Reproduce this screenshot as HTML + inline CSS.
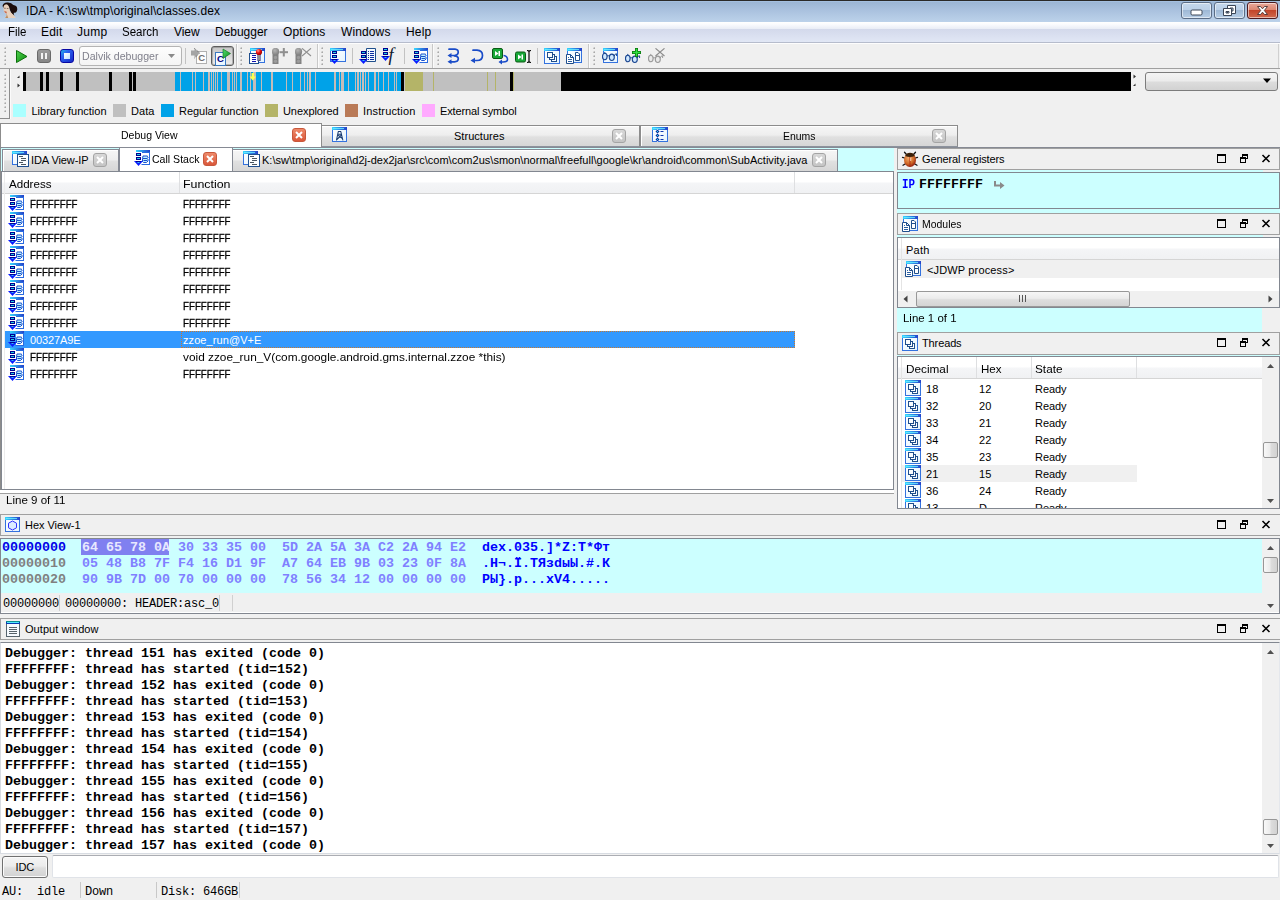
<!DOCTYPE html>
<html><head><meta charset="utf-8"><title>IDA</title>
<style>
html,body{margin:0;padding:0;}
body{width:1280px;height:900px;position:relative;overflow:hidden;background:#f0f0f0;font-family:"Liberation Sans",sans-serif;}
div,span,svg{position:absolute;box-sizing:border-box;}
span{white-space:pre;display:block;}
.s{font-family:"Liberation Sans",sans-serif;}
.m{font-family:"Liberation Mono",monospace;}
.b{font-weight:bold;}
</style></head><body>
<svg width="0" height="0" style="left:0;top:0"><defs>
<linearGradient id="wb" x1="0" y1="0" x2="1" y2="0"><stop offset="0" stop-color="#38d8ff"/><stop offset="0.6" stop-color="#2a7be0"/><stop offset="1" stop-color="#2440c8"/></linearGradient>
<linearGradient id="wf" x1="0" y1="0" x2="1" y2="1"><stop offset="0" stop-color="#ffffff"/><stop offset="1" stop-color="#e4f4ff"/></linearGradient>
<linearGradient id="gg" x1="0" y1="0" x2="1" y2="1"><stop offset="0" stop-color="#56e070"/><stop offset="1" stop-color="#0a8a1a"/></linearGradient>
<radialGradient id="bug" cx="0.4" cy="0.35" r="0.7"><stop offset="0" stop-color="#f6b070"/><stop offset="0.6" stop-color="#d06a28"/><stop offset="1" stop-color="#8a1408"/></radialGradient>
<radialGradient id="red" cx="0.35" cy="0.3" r="0.7"><stop offset="0" stop-color="#ff9a90"/><stop offset="0.5" stop-color="#f01010"/><stop offset="1" stop-color="#a00000"/></radialGradient>
<radialGradient id="gry" cx="0.4" cy="0.35" r="0.7"><stop offset="0" stop-color="#b4b4b4"/><stop offset="1" stop-color="#7c7c7c"/></radialGradient>
</defs></svg>
<div style="left:0px;top:0px;width:1280px;height:22px;background:linear-gradient(#98b3d2 0%,#a9c1de 45%,#bcd2ea 100%);"></div>
<div style="left:0px;top:0px;width:1280px;height:1px;background:#2a2a28;"></div>
<div style="left:0px;top:1px;width:1280px;height:1px;background:#a4c0e0;"></div>
<span class="s" style="left:26px;top:3px;font-size:12px;line-height:16px;letter-spacing:0.091px;">IDA - K:\sw\tmp\original\classes.dex</span>
<div style="left:1181px;top:2px;width:31px;height:17px;background:linear-gradient(#c5d8ec 0%,#bbd0e8 45%,#9fb9d6 50%,#b7cee6 100%);border:1px solid #5b6d86;border-radius:3px;box-shadow:inset 0 0 0 1px rgba(255,255,255,.55);"></div>
<div style="left:1214px;top:2px;width:31px;height:17px;background:linear-gradient(#c5d8ec 0%,#bbd0e8 45%,#9fb9d6 50%,#b7cee6 100%);border:1px solid #5b6d86;border-radius:3px;box-shadow:inset 0 0 0 1px rgba(255,255,255,.55);"></div>
<div style="left:1247px;top:2px;width:31px;height:17px;background:linear-gradient(#e9a99b 0%,#dc8671 45%,#c2452a 50%,#cf6a4f 100%);border:1px solid #4d1a1f;border-radius:3px;box-shadow:inset 0 0 0 1px rgba(255,255,255,.55);"></div>
<div style="left:0px;top:22px;width:1280px;height:20px;background:linear-gradient(#ffffff 0%,#fbfcfe 10%,#e9edf6 35%,#d3d9eb 35.1%,#d8deef 60%,#e1e7f5 100%);"></div>
<div style="left:0px;top:42px;width:1280px;height:1px;background:#b6bccc;"></div>
<div style="left:0px;top:43px;width:1280px;height:1px;background:#fdfdfd;"></div>
<span class="s" style="left:8px;top:24px;font-size:12px;line-height:16px;transform:scaleX(0.9568);transform-origin:0 0;">File</span>
<span class="s" style="left:41px;top:24px;font-size:12px;line-height:16px;letter-spacing:0.206px;">Edit</span>
<span class="s" style="left:77px;top:24px;font-size:12px;line-height:16px;letter-spacing:0.289px;">Jump</span>
<span class="s" style="left:122px;top:24px;font-size:12px;line-height:16px;transform:scaleX(0.9600);transform-origin:0 0;">Search</span>
<span class="s" style="left:174px;top:24px;font-size:12px;line-height:16px;letter-spacing:-0.073px;">View</span>
<span class="s" style="left:215px;top:24px;font-size:12px;line-height:16px;letter-spacing:-0.026px;">Debugger</span>
<span class="s" style="left:283px;top:24px;font-size:12px;line-height:16px;letter-spacing:0.163px;">Options</span>
<span class="s" style="left:341px;top:24px;font-size:12px;line-height:16px;letter-spacing:0.117px;">Windows</span>
<span class="s" style="left:406px;top:24px;font-size:12px;line-height:16px;letter-spacing:0.205px;">Help</span>
<div style="left:0px;top:68px;width:1280px;height:1px;background:#a0a0a0;"></div>
<div style="left:1278px;top:44px;width:1px;height:24px;background:#d0d0d0;"></div>
<div style="left:4px;top:47px;width:2px;height:2px;background:linear-gradient(135deg,#fbfbfb 0%,#c4c4c4 50%,#8c8c8c 100%);"></div>
<div style="left:4px;top:51px;width:2px;height:2px;background:linear-gradient(135deg,#fbfbfb 0%,#c4c4c4 50%,#8c8c8c 100%);"></div>
<div style="left:4px;top:55px;width:2px;height:2px;background:linear-gradient(135deg,#fbfbfb 0%,#c4c4c4 50%,#8c8c8c 100%);"></div>
<div style="left:4px;top:59px;width:2px;height:2px;background:linear-gradient(135deg,#fbfbfb 0%,#c4c4c4 50%,#8c8c8c 100%);"></div>
<div style="left:4px;top:63px;width:2px;height:2px;background:linear-gradient(135deg,#fbfbfb 0%,#c4c4c4 50%,#8c8c8c 100%);"></div>
<div style="left:240px;top:47px;width:2px;height:2px;background:linear-gradient(135deg,#fbfbfb 0%,#c4c4c4 50%,#8c8c8c 100%);"></div>
<div style="left:240px;top:51px;width:2px;height:2px;background:linear-gradient(135deg,#fbfbfb 0%,#c4c4c4 50%,#8c8c8c 100%);"></div>
<div style="left:240px;top:55px;width:2px;height:2px;background:linear-gradient(135deg,#fbfbfb 0%,#c4c4c4 50%,#8c8c8c 100%);"></div>
<div style="left:240px;top:59px;width:2px;height:2px;background:linear-gradient(135deg,#fbfbfb 0%,#c4c4c4 50%,#8c8c8c 100%);"></div>
<div style="left:240px;top:63px;width:2px;height:2px;background:linear-gradient(135deg,#fbfbfb 0%,#c4c4c4 50%,#8c8c8c 100%);"></div>
<div style="left:321px;top:47px;width:2px;height:2px;background:linear-gradient(135deg,#fbfbfb 0%,#c4c4c4 50%,#8c8c8c 100%);"></div>
<div style="left:321px;top:51px;width:2px;height:2px;background:linear-gradient(135deg,#fbfbfb 0%,#c4c4c4 50%,#8c8c8c 100%);"></div>
<div style="left:321px;top:55px;width:2px;height:2px;background:linear-gradient(135deg,#fbfbfb 0%,#c4c4c4 50%,#8c8c8c 100%);"></div>
<div style="left:321px;top:59px;width:2px;height:2px;background:linear-gradient(135deg,#fbfbfb 0%,#c4c4c4 50%,#8c8c8c 100%);"></div>
<div style="left:321px;top:63px;width:2px;height:2px;background:linear-gradient(135deg,#fbfbfb 0%,#c4c4c4 50%,#8c8c8c 100%);"></div>
<div style="left:437px;top:47px;width:2px;height:2px;background:linear-gradient(135deg,#fbfbfb 0%,#c4c4c4 50%,#8c8c8c 100%);"></div>
<div style="left:437px;top:51px;width:2px;height:2px;background:linear-gradient(135deg,#fbfbfb 0%,#c4c4c4 50%,#8c8c8c 100%);"></div>
<div style="left:437px;top:55px;width:2px;height:2px;background:linear-gradient(135deg,#fbfbfb 0%,#c4c4c4 50%,#8c8c8c 100%);"></div>
<div style="left:437px;top:59px;width:2px;height:2px;background:linear-gradient(135deg,#fbfbfb 0%,#c4c4c4 50%,#8c8c8c 100%);"></div>
<div style="left:437px;top:63px;width:2px;height:2px;background:linear-gradient(135deg,#fbfbfb 0%,#c4c4c4 50%,#8c8c8c 100%);"></div>
<div style="left:593px;top:47px;width:2px;height:2px;background:linear-gradient(135deg,#fbfbfb 0%,#c4c4c4 50%,#8c8c8c 100%);"></div>
<div style="left:593px;top:51px;width:2px;height:2px;background:linear-gradient(135deg,#fbfbfb 0%,#c4c4c4 50%,#8c8c8c 100%);"></div>
<div style="left:593px;top:55px;width:2px;height:2px;background:linear-gradient(135deg,#fbfbfb 0%,#c4c4c4 50%,#8c8c8c 100%);"></div>
<div style="left:593px;top:59px;width:2px;height:2px;background:linear-gradient(135deg,#fbfbfb 0%,#c4c4c4 50%,#8c8c8c 100%);"></div>
<div style="left:593px;top:63px;width:2px;height:2px;background:linear-gradient(135deg,#fbfbfb 0%,#c4c4c4 50%,#8c8c8c 100%);"></div>
<div style="left:185px;top:48px;width:1px;height:16px;background:#c2c2c2;"></div>
<div style="left:352px;top:48px;width:1px;height:16px;background:#c2c2c2;"></div>
<div style="left:404px;top:48px;width:1px;height:16px;background:#c2c2c2;"></div>
<div style="left:537px;top:48px;width:1px;height:16px;background:#c2c2c2;"></div>
<div style="left:236px;top:44px;width:1px;height:24px;background:#c8c8c8;"></div>
<div style="left:237px;top:44px;width:1px;height:24px;background:#fbfbfb;"></div>
<div style="left:317px;top:44px;width:1px;height:24px;background:#c8c8c8;"></div>
<div style="left:318px;top:44px;width:1px;height:24px;background:#fbfbfb;"></div>
<div style="left:432px;top:44px;width:1px;height:24px;background:#c8c8c8;"></div>
<div style="left:433px;top:44px;width:1px;height:24px;background:#fbfbfb;"></div>
<div style="left:588px;top:44px;width:1px;height:24px;background:#c8c8c8;"></div>
<div style="left:589px;top:44px;width:1px;height:24px;background:#fbfbfb;"></div>
<svg style="left:13px;top:48px;" width="16" height="16" viewBox="0 0 16 16"><defs><linearGradient id="gp" x1="0" y1="0" x2="1" y2="1"><stop offset="0" stop-color="#4fd24f"/><stop offset="1" stop-color="#0c8a0c"/></linearGradient></defs><path d="M3.5 2.5 L14 8.5 L3.5 14.5 Z" fill="url(#gp)" stroke="#0a6e0a" stroke-width="1"/></svg>
<div style="left:37px;top:49px;width:14px;height:14px;background:linear-gradient(#9c9c9c,#868686);border:1px solid #6a6a6a;border-radius:3px;"></div>
<div style="left:41px;top:53px;width:2px;height:6px;background:#f4f4f4;"></div>
<div style="left:45px;top:53px;width:2px;height:6px;background:#f4f4f4;"></div>
<div style="left:60px;top:49px;width:14px;height:14px;background:linear-gradient(135deg,#20b4e8 0%,#2c60f0 35%,#1428c4 100%);border:1px solid #0808a4;border-radius:3px;"></div>
<div style="left:64px;top:53px;width:6px;height:6px;background:linear-gradient(135deg,#ffffff,#bfe0ff);"></div>
<div style="left:79px;top:46px;width:103px;height:20px;background:linear-gradient(#fdfdfd,#f4f4f4);border:1px solid #b4b4b4;border-radius:3px;"></div>
<span class="s" style="left:82px;top:49px;font-size:11.5px;line-height:14px;color:#80808c;transform:scaleX(0.9205);transform-origin:0 0;">Dalvik debugger</span>
<svg style="left:167px;top:53px;" width="10" height="6" viewBox="0 0 10 6"><path d="M1 1 L8 1 L4.5 5 Z" fill="#8a8a8a"/></svg>
<div style="left:211px;top:46px;width:23px;height:20px;background:linear-gradient(#c6c6c6,#ececec);border:1px solid #5c5c5c;border-radius:3px;box-shadow:inset 0 0 0 1px rgba(90,90,90,.35);"></div>
<div style="left:9px;top:69px;width:1px;height:50px;background:#8c8c8c;"></div>
<div style="left:10px;top:69px;width:1px;height:50px;background:#fbfbfb;"></div>
<div style="left:0px;top:118px;width:10px;height:1px;background:#8c8c8c;"></div>
<div style="left:4px;top:74px;width:2px;height:2px;background:linear-gradient(135deg,#fbfbfb 0%,#c4c4c4 50%,#8c8c8c 100%);"></div>
<div style="left:4px;top:78px;width:2px;height:2px;background:linear-gradient(135deg,#fbfbfb 0%,#c4c4c4 50%,#8c8c8c 100%);"></div>
<div style="left:4px;top:82px;width:2px;height:2px;background:linear-gradient(135deg,#fbfbfb 0%,#c4c4c4 50%,#8c8c8c 100%);"></div>
<div style="left:4px;top:86px;width:2px;height:2px;background:linear-gradient(135deg,#fbfbfb 0%,#c4c4c4 50%,#8c8c8c 100%);"></div>
<div style="left:4px;top:90px;width:2px;height:2px;background:linear-gradient(135deg,#fbfbfb 0%,#c4c4c4 50%,#8c8c8c 100%);"></div>
<div style="left:4px;top:94px;width:2px;height:2px;background:linear-gradient(135deg,#fbfbfb 0%,#c4c4c4 50%,#8c8c8c 100%);"></div>
<div style="left:4px;top:98px;width:2px;height:2px;background:linear-gradient(135deg,#fbfbfb 0%,#c4c4c4 50%,#8c8c8c 100%);"></div>
<div style="left:4px;top:102px;width:2px;height:2px;background:linear-gradient(135deg,#fbfbfb 0%,#c4c4c4 50%,#8c8c8c 100%);"></div>
<div style="left:4px;top:106px;width:2px;height:2px;background:linear-gradient(135deg,#fbfbfb 0%,#c4c4c4 50%,#8c8c8c 100%);"></div>
<div style="left:4px;top:110px;width:2px;height:2px;background:linear-gradient(135deg,#fbfbfb 0%,#c4c4c4 50%,#8c8c8c 100%);"></div>
<div style="left:23px;top:72px;width:1108px;height:19px;background:#c0c0c0;"></div>
<div style="left:23px;top:72px;width:3px;height:19px;background:#000;"></div>
<div style="left:40px;top:72px;width:3px;height:19px;background:#000;"></div>
<div style="left:46px;top:72px;width:3px;height:19px;background:#000;"></div>
<div style="left:60px;top:72px;width:3px;height:19px;background:#000;"></div>
<div style="left:76px;top:72px;width:3px;height:19px;background:#000;"></div>
<div style="left:109px;top:72px;width:3px;height:19px;background:#000;"></div>
<div style="left:129px;top:72px;width:3px;height:19px;background:#000;"></div>
<div style="left:133px;top:72px;width:3px;height:19px;background:#000;"></div>
<div style="left:401px;top:72px;width:3px;height:19px;background:#000;"></div>
<div style="left:510px;top:72px;width:3px;height:19px;background:#000;"></div>
<div style="left:561px;top:72px;width:570px;height:19px;background:#000;"></div>
<div style="left:175px;top:72px;width:226px;height:19px;background:#00a2e8;"></div>
<div style="left:180px;top:72px;width:1px;height:19px;background:#c4bcb8;"></div>
<div style="left:192px;top:72px;width:1px;height:19px;background:#c4bcb8;"></div>
<div style="left:195px;top:72px;width:1px;height:19px;background:#c4bcb8;"></div>
<div style="left:203px;top:72px;width:1px;height:19px;background:#c4bcb8;"></div>
<div style="left:208px;top:72px;width:2px;height:19px;background:#c4bcb8;"></div>
<div style="left:211px;top:72px;width:1px;height:19px;background:#c4bcb8;"></div>
<div style="left:213px;top:72px;width:1px;height:19px;background:#c4bcb8;"></div>
<div style="left:215px;top:72px;width:1px;height:19px;background:#c4bcb8;"></div>
<div style="left:217px;top:72px;width:1px;height:19px;background:#c4bcb8;"></div>
<div style="left:221px;top:72px;width:1px;height:19px;background:#c4bcb8;"></div>
<div style="left:227px;top:72px;width:3px;height:19px;background:#c4bcb8;"></div>
<div style="left:232px;top:72px;width:1px;height:19px;background:#c4bcb8;"></div>
<div style="left:234px;top:72px;width:1px;height:19px;background:#c4bcb8;"></div>
<div style="left:236px;top:72px;width:1px;height:19px;background:#c4bcb8;"></div>
<div style="left:240px;top:72px;width:2px;height:19px;background:#c4bcb8;"></div>
<div style="left:247px;top:72px;width:1px;height:19px;background:#c4bcb8;"></div>
<div style="left:250px;top:72px;width:1px;height:19px;background:#c4bcb8;"></div>
<div style="left:253px;top:72px;width:3px;height:19px;background:#c4bcb8;"></div>
<div style="left:261px;top:72px;width:1px;height:19px;background:#c4bcb8;"></div>
<div style="left:271px;top:72px;width:2px;height:19px;background:#c4bcb8;"></div>
<div style="left:286px;top:72px;width:1px;height:19px;background:#c4bcb8;"></div>
<div style="left:292px;top:72px;width:1px;height:19px;background:#c4bcb8;"></div>
<div style="left:300px;top:72px;width:1px;height:19px;background:#c4bcb8;"></div>
<div style="left:304px;top:72px;width:1px;height:19px;background:#c4bcb8;"></div>
<div style="left:307px;top:72px;width:1px;height:19px;background:#c4bcb8;"></div>
<div style="left:309px;top:72px;width:2px;height:19px;background:#c4bcb8;"></div>
<div style="left:315px;top:72px;width:1px;height:19px;background:#c4bcb8;"></div>
<div style="left:334px;top:72px;width:2px;height:19px;background:#c4bcb8;"></div>
<div style="left:339px;top:72px;width:1px;height:19px;background:#c4bcb8;"></div>
<div style="left:341px;top:72px;width:3px;height:19px;background:#c4bcb8;"></div>
<div style="left:348px;top:72px;width:1px;height:19px;background:#c4bcb8;"></div>
<div style="left:355px;top:72px;width:1px;height:19px;background:#c4bcb8;"></div>
<div style="left:357px;top:72px;width:2px;height:19px;background:#c4bcb8;"></div>
<div style="left:360px;top:72px;width:1px;height:19px;background:#c4bcb8;"></div>
<div style="left:362px;top:72px;width:2px;height:19px;background:#c4bcb8;"></div>
<div style="left:365px;top:72px;width:1px;height:19px;background:#c4bcb8;"></div>
<div style="left:368px;top:72px;width:1px;height:19px;background:#c4bcb8;"></div>
<div style="left:374px;top:72px;width:2px;height:19px;background:#c4bcb8;"></div>
<div style="left:378px;top:72px;width:1px;height:19px;background:#c4bcb8;"></div>
<div style="left:383px;top:72px;width:1px;height:19px;background:#c4bcb8;"></div>
<div style="left:388px;top:72px;width:1px;height:19px;background:#c4bcb8;"></div>
<div style="left:394px;top:72px;width:1px;height:19px;background:#c4bcb8;"></div>
<div style="left:396px;top:72px;width:1px;height:19px;background:#c4bcb8;"></div>
<div style="left:405px;top:72px;width:18px;height:19px;background:#b4b468;"></div>
<div style="left:433px;top:72px;width:1px;height:19px;background:#b4b468;"></div>
<div style="left:487px;top:72px;width:1px;height:19px;background:#b4b468;"></div>
<div style="left:495px;top:72px;width:1px;height:19px;background:#b4b468;"></div>
<div style="left:513px;top:72px;width:1px;height:19px;background:#b4b468;"></div>
<svg style="left:249px;top:73px;" width="8" height="8" viewBox="0 0 8 8"><path d="M2.5 0 H5 V3.5 H7 L3.75 7.5 L0.5 3.5 H2.5 Z" fill="#ffff50"/></svg>
<svg style="left:16px;top:74px;" width="5" height="14" viewBox="0 0 5 14"><path d="M3.5 1.5 V4 H1 Z" fill="#333"/><path d="M1.5 9.5 L4 11.5 L1.5 13.5 Z" fill="#333"/></svg>
<svg style="left:1132px;top:74px;" width="5" height="14" viewBox="0 0 5 14"><path d="M1.5 0.5 L4 2.5 L1.5 4.5 Z" fill="#333"/><path d="M3.5 9.5 V12 H1 Z" fill="#333"/></svg>
<div style="left:1145px;top:72px;width:133px;height:19px;background:linear-gradient(#f4f4f4 0%,#ececec 45%,#dcdcdc 55%,#d2d2d2 100%);border:1px solid #7c7c7c;border-radius:3px;"></div>
<svg style="left:1263px;top:78px;" width="9" height="6" viewBox="0 0 9 6"><path d="M0 0.5 H8 L4 5 Z" fill="#000"/></svg>
<div style="left:13px;top:104px;width:13px;height:13px;background:#aaffff;"></div>
<span class="s" style="left:31.5px;top:104px;font-size:11px;line-height:15px;letter-spacing:-0.013px;">Library function</span>
<div style="left:113px;top:104px;width:13px;height:13px;background:#c0c0c0;"></div>
<span class="s" style="left:131px;top:104px;font-size:11px;line-height:15px;letter-spacing:0.066px;">Data</span>
<div style="left:161px;top:104px;width:13px;height:13px;background:#00a2e8;"></div>
<span class="s" style="left:179px;top:104px;font-size:11px;line-height:15px;letter-spacing:-0.038px;">Regular function</span>
<div style="left:265px;top:104px;width:13px;height:13px;background:#b4b468;"></div>
<span class="s" style="left:283px;top:104px;font-size:11px;line-height:15px;letter-spacing:-0.076px;">Unexplored</span>
<div style="left:345px;top:104px;width:13px;height:13px;background:#b97a57;"></div>
<span class="s" style="left:363px;top:104px;font-size:11px;line-height:15px;letter-spacing:0.159px;">Instruction</span>
<div style="left:422px;top:104px;width:13px;height:13px;background:#ffaaff;"></div>
<span class="s" style="left:440px;top:104px;font-size:11px;line-height:15px;letter-spacing:-0.117px;">External symbol</span>
<div style="left:0px;top:123px;width:322px;height:24px;background:#fff;border:1px solid #8c8c8c;border-bottom:none;"></div>
<span class="s" style="left:121px;top:128px;font-size:11px;line-height:15px;transform:scaleX(0.9558);transform-origin:0 0;">Debug View</span>
<div style="left:292px;top:128px;width:14px;height:14px;background:linear-gradient(#ee8a6a,#d9573a);border:1px solid #c8583c;border-radius:3px;"></div>
<svg style="left:295px;top:131px;" width="8" height="8" viewBox="0 0 8 8"><path d="M1 1 L7 7 M7 1 L1 7" stroke="#fff" stroke-width="2" fill="none"/></svg>
<div style="left:322px;top:125px;width:318px;height:22px;background:linear-gradient(#f6f6f6 0%,#eeeeee 45%,#e0e0e0 55%,#d6d6d6 100%);border:1px solid #8c8c8c;border-left:none;border-bottom-color:#8c929c;box-shadow:inset 0 1px 0 #fff;"></div>
<span class="s" style="left:454px;top:129px;font-size:11px;line-height:15px;letter-spacing:0.037px;">Structures</span>
<div style="left:612px;top:129px;width:14px;height:14px;background:linear-gradient(#d8d8d8,#c4c4c4);border:1px solid #a4a4a4;border-radius:3px;"></div>
<svg style="left:615px;top:132px;" width="8" height="8" viewBox="0 0 8 8"><path d="M1 1 L7 7 M7 1 L1 7" stroke="#fff" stroke-width="2" fill="none"/></svg>
<div style="left:640px;top:125px;width:318px;height:22px;background:linear-gradient(#f6f6f6 0%,#eeeeee 45%,#e0e0e0 55%,#d6d6d6 100%);border:1px solid #8c8c8c;border-bottom-color:#8c929c;box-shadow:inset 1px 1px 0 #fff;"></div>
<span class="s" style="left:783px;top:129px;font-size:11px;line-height:15px;transform:scaleX(0.9493);transform-origin:0 0;">Enums</span>
<div style="left:932px;top:129px;width:14px;height:14px;background:linear-gradient(#d8d8d8,#c4c4c4);border:1px solid #a4a4a4;border-radius:3px;"></div>
<svg style="left:935px;top:132px;" width="8" height="8" viewBox="0 0 8 8"><path d="M1 1 L7 7 M7 1 L1 7" stroke="#fff" stroke-width="2" fill="none"/></svg>
<div style="left:0px;top:147px;width:894px;height:365px;background:#ccffff;"></div>
<div style="left:0px;top:147px;width:1px;height:366px;background:#8c8c8c;"></div>
<div style="left:2px;top:149px;width:117px;height:22px;background:linear-gradient(#f6f6f6 0%,#eeeeee 45%,#e0e0e0 55%,#d6d6d6 100%);border:1px solid #868a94;border-bottom:none;box-shadow:inset 1px 1px 0 #fff;"></div>
<span class="s" style="left:31px;top:153px;font-size:11px;line-height:15px;letter-spacing:-0.090px;">IDA View-IP</span>
<div style="left:93px;top:153px;width:14px;height:14px;background:linear-gradient(#d8d8d8,#c4c4c4);border:1px solid #a4a4a4;border-radius:3px;"></div>
<svg style="left:96px;top:156px;" width="8" height="8" viewBox="0 0 8 8"><path d="M1 1 L7 7 M7 1 L1 7" stroke="#fff" stroke-width="2" fill="none"/></svg>
<div style="left:119px;top:147px;width:114px;height:25px;background:#fff;border:1px solid #868a94;border-bottom:none;"></div>
<span class="s" style="left:152px;top:152px;font-size:11px;line-height:15px;transform:scaleX(0.9593);transform-origin:0 0;">Call Stack</span>
<div style="left:203px;top:152px;width:14px;height:14px;background:linear-gradient(#ee8a6a,#d9573a);border:1px solid #c8583c;border-radius:3px;"></div>
<svg style="left:206px;top:155px;" width="8" height="8" viewBox="0 0 8 8"><path d="M1 1 L7 7 M7 1 L1 7" stroke="#fff" stroke-width="2" fill="none"/></svg>
<div style="left:233px;top:149px;width:605px;height:22px;background:linear-gradient(#f6f6f6 0%,#eeeeee 45%,#e0e0e0 55%,#d6d6d6 100%);border:1px solid #868a94;border-left:none;border-bottom:none;box-shadow:inset 0 1px 0 #fff;"></div>
<span class="s" style="left:262px;top:153px;font-size:11px;line-height:15px;letter-spacing:0.020px;">K:\sw\tmp\original\d2j-dex2jar\src\com\com2us\smon\normal\freefull\google\kr\android\common\SubActivity.java</span>
<div style="left:812px;top:153px;width:14px;height:14px;background:linear-gradient(#d8d8d8,#c4c4c4);border:1px solid #a4a4a4;border-radius:3px;"></div>
<svg style="left:815px;top:156px;" width="8" height="8" viewBox="0 0 8 8"><path d="M1 1 L7 7 M7 1 L1 7" stroke="#fff" stroke-width="2" fill="none"/></svg>
<div style="left:1px;top:171px;width:893px;height:319px;background:#fff;border:1px solid #828790;"></div>
<div style="left:2px;top:172px;width:891px;height:21px;background:linear-gradient(#ffffff 0%,#ffffff 45%,#f4f5f7 55%,#f0f1f3 100%);"></div>
<div style="left:2px;top:193px;width:891px;height:1px;background:#d5d5d5;"></div>
<div style="left:179px;top:172px;width:1px;height:21px;background:#dedfe1;"></div>
<div style="left:794px;top:172px;width:1px;height:21px;background:#dedfe1;"></div>
<div style="left:4px;top:172px;width:1px;height:317px;background:#ececec;"></div>
<span class="s" style="left:9px;top:177px;font-size:11px;line-height:15px;transform:scaleX(1.0532);transform-origin:0 0;">Address</span>
<span class="s" style="left:183px;top:177px;font-size:11px;line-height:15px;transform:scaleX(1.1259);transform-origin:0 0;">Function</span>
<span class="s" style="left:30px;top:197px;font-size:11px;line-height:15px;transform:scaleX(0.8837);transform-origin:0 0;-webkit-text-stroke:0.3px;">FFFFFFFF</span>
<span class="s" style="left:183px;top:197px;font-size:11px;line-height:15px;transform:scaleX(0.8837);transform-origin:0 0;-webkit-text-stroke:0.3px;">FFFFFFFF</span>
<span class="s" style="left:30px;top:214px;font-size:11px;line-height:15px;transform:scaleX(0.8837);transform-origin:0 0;-webkit-text-stroke:0.3px;">FFFFFFFF</span>
<span class="s" style="left:183px;top:214px;font-size:11px;line-height:15px;transform:scaleX(0.8837);transform-origin:0 0;-webkit-text-stroke:0.3px;">FFFFFFFF</span>
<span class="s" style="left:30px;top:231px;font-size:11px;line-height:15px;transform:scaleX(0.8837);transform-origin:0 0;-webkit-text-stroke:0.3px;">FFFFFFFF</span>
<span class="s" style="left:183px;top:231px;font-size:11px;line-height:15px;transform:scaleX(0.8837);transform-origin:0 0;-webkit-text-stroke:0.3px;">FFFFFFFF</span>
<span class="s" style="left:30px;top:248px;font-size:11px;line-height:15px;transform:scaleX(0.8837);transform-origin:0 0;-webkit-text-stroke:0.3px;">FFFFFFFF</span>
<span class="s" style="left:183px;top:248px;font-size:11px;line-height:15px;transform:scaleX(0.8837);transform-origin:0 0;-webkit-text-stroke:0.3px;">FFFFFFFF</span>
<span class="s" style="left:30px;top:265px;font-size:11px;line-height:15px;transform:scaleX(0.8837);transform-origin:0 0;-webkit-text-stroke:0.3px;">FFFFFFFF</span>
<span class="s" style="left:183px;top:265px;font-size:11px;line-height:15px;transform:scaleX(0.8837);transform-origin:0 0;-webkit-text-stroke:0.3px;">FFFFFFFF</span>
<span class="s" style="left:30px;top:282px;font-size:11px;line-height:15px;transform:scaleX(0.8837);transform-origin:0 0;-webkit-text-stroke:0.3px;">FFFFFFFF</span>
<span class="s" style="left:183px;top:282px;font-size:11px;line-height:15px;transform:scaleX(0.8837);transform-origin:0 0;-webkit-text-stroke:0.3px;">FFFFFFFF</span>
<span class="s" style="left:30px;top:299px;font-size:11px;line-height:15px;transform:scaleX(0.8837);transform-origin:0 0;-webkit-text-stroke:0.3px;">FFFFFFFF</span>
<span class="s" style="left:183px;top:299px;font-size:11px;line-height:15px;transform:scaleX(0.8837);transform-origin:0 0;-webkit-text-stroke:0.3px;">FFFFFFFF</span>
<span class="s" style="left:30px;top:316px;font-size:11px;line-height:15px;transform:scaleX(0.8837);transform-origin:0 0;-webkit-text-stroke:0.3px;">FFFFFFFF</span>
<span class="s" style="left:183px;top:316px;font-size:11px;line-height:15px;transform:scaleX(0.8837);transform-origin:0 0;-webkit-text-stroke:0.3px;">FFFFFFFF</span>
<div style="left:5px;top:331px;width:790px;height:17px;background:#3399ff;"></div>
<div style="left:181px;top:331px;width:614px;height:17px;border:1px dotted #c87830;"></div>
<span class="s" style="left:30px;top:333px;font-size:11px;line-height:15px;color:#fff;letter-spacing:-0.110px;">00327A9E</span>
<span class="s" style="left:183px;top:333px;font-size:11px;line-height:15px;color:#fff;letter-spacing:0.082px;">zzoe_run@V+E</span>
<span class="s" style="left:30px;top:350px;font-size:11px;line-height:15px;transform:scaleX(0.8837);transform-origin:0 0;-webkit-text-stroke:0.3px;">FFFFFFFF</span>
<span class="s" style="left:183px;top:350px;font-size:11px;line-height:15px;transform:scaleX(1.0764);transform-origin:0 0;">void zzoe_run_V(com.google.android.gms.internal.zzoe *this)</span>
<span class="s" style="left:30px;top:367px;font-size:11px;line-height:15px;transform:scaleX(0.8837);transform-origin:0 0;-webkit-text-stroke:0.3px;">FFFFFFFF</span>
<span class="s" style="left:183px;top:367px;font-size:11px;line-height:15px;transform:scaleX(0.8837);transform-origin:0 0;-webkit-text-stroke:0.3px;">FFFFFFFF</span>
<div style="left:0px;top:490px;width:894px;height:3px;background:#fff;"></div>
<div style="left:0px;top:493px;width:894px;height:1px;background:#a0a0a0;"></div>
<div style="left:0px;top:494px;width:894px;height:19px;background:#f0f0f0;"></div>
<span class="s" style="left:6px;top:493px;font-size:11px;line-height:15px;transform:scaleX(1.0498);transform-origin:0 0;">Line 9 of 11</span>
<div style="left:894px;top:147px;width:3px;height:366px;background:#f0f0f0;"></div>
<div style="left:897px;top:149px;width:383px;height:360px;background:#ccffff;"></div>
<div style="left:0px;top:147px;width:1280px;height:1px;background:#868a94;"></div>
<div style="left:897px;top:148px;width:383px;height:22px;background:#f0f0f0;border:1px solid #a0a0a0;"></div>
<span class="s" style="left:922px;top:152px;font-size:11px;line-height:15px;letter-spacing:-0.110px;">General registers</span>
<div style="left:1217px;top:154px;width:9px;height:9px;border:1px solid #000;border-top-width:2px;"></div>
<div style="left:1242px;top:154px;width:6px;height:5px;border:1px solid #000;border-top-width:2px;"></div>
<div style="left:1240px;top:157px;width:6px;height:6px;border:1px solid #000;border-top-width:2px;background:#f0f0f0;"></div>
<svg style="left:1261px;top:154px;" width="10" height="9" viewBox="0 0 10 9"><path d="M1.5 1 L8.5 8 M8.5 1 L1.5 8" stroke="#000" stroke-width="1.6" fill="none"/></svg>
<div style="left:897px;top:172px;width:383px;height:37px;background:#ccffff;border:1px solid #828790;"></div>
<span class="m b" style="left:902px;top:177px;font-size:13.33px;line-height:16px;color:#0000ff;transform:scaleX(0.8126);transform-origin:0 0;">IP</span>
<span class="m b" style="left:919px;top:177px;font-size:13.33px;line-height:16px;">FFFFFFFF</span>
<svg style="left:993px;top:180px;" width="12" height="11" viewBox="0 0 12 11"><path d="M2 1 V5.5 H8" fill="none" stroke="#8a8a8a" stroke-width="2"/><path d="M7 2 L11.5 5.5 L7 9 Z" fill="#8a8a8a"/></svg>
<div style="left:897px;top:213px;width:383px;height:22px;background:#f0f0f0;border:1px solid #a0a0a0;"></div>
<span class="s" style="left:922px;top:217px;font-size:11px;line-height:15px;transform:scaleX(0.9500);transform-origin:0 0;">Modules</span>
<div style="left:1217px;top:219px;width:9px;height:9px;border:1px solid #000;border-top-width:2px;"></div>
<div style="left:1242px;top:219px;width:6px;height:5px;border:1px solid #000;border-top-width:2px;"></div>
<div style="left:1240px;top:222px;width:6px;height:6px;border:1px solid #000;border-top-width:2px;background:#f0f0f0;"></div>
<svg style="left:1261px;top:219px;" width="10" height="9" viewBox="0 0 10 9"><path d="M1.5 1 L8.5 8 M8.5 1 L1.5 8" stroke="#000" stroke-width="1.6" fill="none"/></svg>
<div style="left:897px;top:237px;width:383px;height:71px;background:#fff;border:1px solid #828790;"></div>
<div style="left:898px;top:238px;width:381px;height:21px;background:linear-gradient(#ffffff 0%,#ffffff 45%,#f4f5f7 55%,#f0f1f3 100%);"></div>
<div style="left:898px;top:259px;width:381px;height:1px;background:#d5d5d5;"></div>
<div style="left:901px;top:238px;width:1px;height:52px;background:#e4e4e4;"></div>
<span class="s" style="left:906px;top:243px;font-size:11px;line-height:15px;letter-spacing:0.218px;">Path</span>
<div style="left:902px;top:260px;width:377px;height:18px;background:#f0f0f0;"></div>
<span class="s" style="left:927px;top:263px;font-size:11px;line-height:15px;letter-spacing:0.151px;">&lt;JDWP process&gt;</span>
<div style="left:898px;top:291px;width:381px;height:16px;background:#f0f0f0;"></div>
<div style="left:916px;top:291px;width:214px;height:16px;background:linear-gradient(#f6f6f6 0%,#ececec 45%,#dedede 55%,#d4d4d4 100%);border:1px solid #989898;border-radius:2px;"></div>
<div style="left:1019px;top:295px;width:1px;height:7px;background:#555;"></div>
<div style="left:1022px;top:295px;width:1px;height:7px;background:#555;"></div>
<div style="left:1025px;top:295px;width:1px;height:7px;background:#555;"></div>
<svg style="left:903px;top:295px;" width="5" height="8" viewBox="0 0 5 8"><path d="M4.5 0.5 V7.5 L0.5 4 Z" fill="#444"/></svg>
<svg style="left:1268px;top:295px;" width="5" height="8" viewBox="0 0 5 8"><path d="M0.5 0.5 V7.5 L4.5 4 Z" fill="#444"/></svg>
<span class="s" style="left:903px;top:311px;font-size:11px;line-height:15px;transform:scaleX(1.0414);transform-origin:0 0;">Line 1 of 1</span>
<div style="left:1262px;top:308px;width:18px;height:24px;background:#f0f0f0;"></div>
<div style="left:1263px;top:235px;width:17px;height:2px;background:#f0f0f0;"></div>
<div style="left:1263px;top:170px;width:17px;height:2px;background:#f0f0f0;"></div>
<div style="left:897px;top:332px;width:383px;height:23px;background:#f0f0f0;border:1px solid #a0a0a0;"></div>
<span class="s" style="left:922px;top:336px;font-size:11px;line-height:15px;letter-spacing:-0.122px;">Threads</span>
<div style="left:1217px;top:338px;width:9px;height:9px;border:1px solid #000;border-top-width:2px;"></div>
<div style="left:1242px;top:338px;width:6px;height:5px;border:1px solid #000;border-top-width:2px;"></div>
<div style="left:1240px;top:341px;width:6px;height:6px;border:1px solid #000;border-top-width:2px;background:#f0f0f0;"></div>
<svg style="left:1261px;top:338px;" width="10" height="9" viewBox="0 0 10 9"><path d="M1.5 1 L8.5 8 M8.5 1 L1.5 8" stroke="#000" stroke-width="1.6" fill="none"/></svg>
<div style="left:897px;top:356px;width:383px;height:153px;background:#fff;border:1px solid #828790;"></div>
<div style="left:898px;top:357px;width:364px;height:21px;background:linear-gradient(#ffffff 0%,#ffffff 45%,#f4f5f7 55%,#f0f1f3 100%);"></div>
<div style="left:898px;top:378px;width:364px;height:1px;background:#d5d5d5;"></div>
<div style="left:976px;top:357px;width:1px;height:21px;background:#dedfe1;"></div>
<div style="left:1031px;top:357px;width:1px;height:21px;background:#dedfe1;"></div>
<div style="left:1136px;top:357px;width:1px;height:21px;background:#dedfe1;"></div>
<div style="left:901px;top:357px;width:1px;height:151px;background:#e4e4e4;"></div>
<span class="s" style="left:906px;top:362px;font-size:11px;line-height:15px;transform:scaleX(1.0697);transform-origin:0 0;">Decimal</span>
<span class="s" style="left:981px;top:362px;font-size:11px;line-height:15px;transform:scaleX(1.0480);transform-origin:0 0;">Hex</span>
<span class="s" style="left:1035px;top:362px;font-size:11px;line-height:15px;transform:scaleX(1.0707);transform-origin:0 0;">State</span>
<div style="left:898px;top:379px;width:364px;height:129px;overflow:hidden;">
<svg style="left:7px;top:1px;" width="16" height="16" viewBox="0 0 16 16"><rect x="0.5" y="0.5" width="15" height="15" fill="url(#wf)" stroke="#3472de"/><rect x="0" y="0" width="16" height="3" fill="url(#wb)"/><rect x="1" y="1" width="12" height="1" fill="#6ff0ff" opacity=".8"/><rect x="7.5" y="8.5" width="5" height="5" fill="#fbfdff" stroke="#1f4e8c"/><rect x="5.5" y="6.5" width="5" height="5" fill="#fbfdff" stroke="#1f4e8c"/><rect x="3.5" y="4.5" width="5" height="5" fill="#fbfdff" stroke="#1f4e8c"/></svg>
<span class="s" style="left:28px;top:3px;font-size:11px;line-height:15px;letter-spacing:0.132px;">18</span>
<span class="s" style="left:81px;top:3px;font-size:11px;line-height:15px;letter-spacing:0.132px;">12</span>
<span class="s" style="left:137px;top:3px;font-size:11px;line-height:15px;letter-spacing:-0.059px;">Ready</span>
<svg style="left:7px;top:18px;" width="16" height="16" viewBox="0 0 16 16"><rect x="0.5" y="0.5" width="15" height="15" fill="url(#wf)" stroke="#3472de"/><rect x="0" y="0" width="16" height="3" fill="url(#wb)"/><rect x="1" y="1" width="12" height="1" fill="#6ff0ff" opacity=".8"/><rect x="7.5" y="8.5" width="5" height="5" fill="#fbfdff" stroke="#1f4e8c"/><rect x="5.5" y="6.5" width="5" height="5" fill="#fbfdff" stroke="#1f4e8c"/><rect x="3.5" y="4.5" width="5" height="5" fill="#fbfdff" stroke="#1f4e8c"/></svg>
<span class="s" style="left:28px;top:20px;font-size:11px;line-height:15px;letter-spacing:0.132px;">32</span>
<span class="s" style="left:81px;top:20px;font-size:11px;line-height:15px;letter-spacing:0.132px;">20</span>
<span class="s" style="left:137px;top:20px;font-size:11px;line-height:15px;letter-spacing:-0.059px;">Ready</span>
<svg style="left:7px;top:35px;" width="16" height="16" viewBox="0 0 16 16"><rect x="0.5" y="0.5" width="15" height="15" fill="url(#wf)" stroke="#3472de"/><rect x="0" y="0" width="16" height="3" fill="url(#wb)"/><rect x="1" y="1" width="12" height="1" fill="#6ff0ff" opacity=".8"/><rect x="7.5" y="8.5" width="5" height="5" fill="#fbfdff" stroke="#1f4e8c"/><rect x="5.5" y="6.5" width="5" height="5" fill="#fbfdff" stroke="#1f4e8c"/><rect x="3.5" y="4.5" width="5" height="5" fill="#fbfdff" stroke="#1f4e8c"/></svg>
<span class="s" style="left:28px;top:37px;font-size:11px;line-height:15px;letter-spacing:0.132px;">33</span>
<span class="s" style="left:81px;top:37px;font-size:11px;line-height:15px;letter-spacing:0.132px;">21</span>
<span class="s" style="left:137px;top:37px;font-size:11px;line-height:15px;letter-spacing:-0.059px;">Ready</span>
<svg style="left:7px;top:52px;" width="16" height="16" viewBox="0 0 16 16"><rect x="0.5" y="0.5" width="15" height="15" fill="url(#wf)" stroke="#3472de"/><rect x="0" y="0" width="16" height="3" fill="url(#wb)"/><rect x="1" y="1" width="12" height="1" fill="#6ff0ff" opacity=".8"/><rect x="7.5" y="8.5" width="5" height="5" fill="#fbfdff" stroke="#1f4e8c"/><rect x="5.5" y="6.5" width="5" height="5" fill="#fbfdff" stroke="#1f4e8c"/><rect x="3.5" y="4.5" width="5" height="5" fill="#fbfdff" stroke="#1f4e8c"/></svg>
<span class="s" style="left:28px;top:54px;font-size:11px;line-height:15px;letter-spacing:0.132px;">34</span>
<span class="s" style="left:81px;top:54px;font-size:11px;line-height:15px;letter-spacing:0.132px;">22</span>
<span class="s" style="left:137px;top:54px;font-size:11px;line-height:15px;letter-spacing:-0.059px;">Ready</span>
<svg style="left:7px;top:69px;" width="16" height="16" viewBox="0 0 16 16"><rect x="0.5" y="0.5" width="15" height="15" fill="url(#wf)" stroke="#3472de"/><rect x="0" y="0" width="16" height="3" fill="url(#wb)"/><rect x="1" y="1" width="12" height="1" fill="#6ff0ff" opacity=".8"/><rect x="7.5" y="8.5" width="5" height="5" fill="#fbfdff" stroke="#1f4e8c"/><rect x="5.5" y="6.5" width="5" height="5" fill="#fbfdff" stroke="#1f4e8c"/><rect x="3.5" y="4.5" width="5" height="5" fill="#fbfdff" stroke="#1f4e8c"/></svg>
<span class="s" style="left:28px;top:71px;font-size:11px;line-height:15px;letter-spacing:0.132px;">35</span>
<span class="s" style="left:81px;top:71px;font-size:11px;line-height:15px;letter-spacing:0.132px;">23</span>
<span class="s" style="left:137px;top:71px;font-size:11px;line-height:15px;letter-spacing:-0.059px;">Ready</span>
<div style="left:4px;top:86px;width:235px;height:17px;background:#f0f0f0;"></div>
<svg style="left:7px;top:86px;" width="16" height="16" viewBox="0 0 16 16"><rect x="0.5" y="0.5" width="15" height="15" fill="url(#wf)" stroke="#3472de"/><rect x="0" y="0" width="16" height="3" fill="url(#wb)"/><rect x="1" y="1" width="12" height="1" fill="#6ff0ff" opacity=".8"/><rect x="7.5" y="8.5" width="5" height="5" fill="#fbfdff" stroke="#1f4e8c"/><rect x="5.5" y="6.5" width="5" height="5" fill="#fbfdff" stroke="#1f4e8c"/><rect x="3.5" y="4.5" width="5" height="5" fill="#fbfdff" stroke="#1f4e8c"/></svg>
<span class="s" style="left:28px;top:88px;font-size:11px;line-height:15px;letter-spacing:0.132px;">21</span>
<span class="s" style="left:81px;top:88px;font-size:11px;line-height:15px;letter-spacing:0.132px;">15</span>
<span class="s" style="left:137px;top:88px;font-size:11px;line-height:15px;letter-spacing:-0.059px;">Ready</span>
<svg style="left:7px;top:103px;" width="16" height="16" viewBox="0 0 16 16"><rect x="0.5" y="0.5" width="15" height="15" fill="url(#wf)" stroke="#3472de"/><rect x="0" y="0" width="16" height="3" fill="url(#wb)"/><rect x="1" y="1" width="12" height="1" fill="#6ff0ff" opacity=".8"/><rect x="7.5" y="8.5" width="5" height="5" fill="#fbfdff" stroke="#1f4e8c"/><rect x="5.5" y="6.5" width="5" height="5" fill="#fbfdff" stroke="#1f4e8c"/><rect x="3.5" y="4.5" width="5" height="5" fill="#fbfdff" stroke="#1f4e8c"/></svg>
<span class="s" style="left:28px;top:105px;font-size:11px;line-height:15px;letter-spacing:0.132px;">36</span>
<span class="s" style="left:81px;top:105px;font-size:11px;line-height:15px;letter-spacing:0.132px;">24</span>
<span class="s" style="left:137px;top:105px;font-size:11px;line-height:15px;letter-spacing:-0.059px;">Ready</span>
<svg style="left:7px;top:120px;" width="16" height="16" viewBox="0 0 16 16"><rect x="0.5" y="0.5" width="15" height="15" fill="url(#wf)" stroke="#3472de"/><rect x="0" y="0" width="16" height="3" fill="url(#wb)"/><rect x="1" y="1" width="12" height="1" fill="#6ff0ff" opacity=".8"/><rect x="7.5" y="8.5" width="5" height="5" fill="#fbfdff" stroke="#1f4e8c"/><rect x="5.5" y="6.5" width="5" height="5" fill="#fbfdff" stroke="#1f4e8c"/><rect x="3.5" y="4.5" width="5" height="5" fill="#fbfdff" stroke="#1f4e8c"/></svg>
<span class="s" style="left:28px;top:122px;font-size:11px;line-height:15px;letter-spacing:0.132px;">13</span>
<span class="s" style="left:81px;top:122px;font-size:11px;line-height:15px;">D</span>
<span class="s" style="left:137px;top:122px;font-size:11px;line-height:15px;letter-spacing:-0.059px;">Ready</span>
</div>
<div style="left:1262px;top:357px;width:17px;height:151px;background:#f0f0f0;"></div>
<svg style="left:1267px;top:364px;" width="7" height="4" viewBox="0 0 7 4"><path d="M0 4 H7 L3.5 0 Z" fill="#505050"/></svg>
<svg style="left:1267px;top:499px;" width="7" height="4" viewBox="0 0 7 4"><path d="M0 0 H7 L3.5 4 Z" fill="#505050"/></svg>
<div style="left:1263px;top:442px;width:15px;height:16px;background:linear-gradient(90deg,#f8f8f8 0%,#ececec 45%,#dcdcdc 55%,#d2d2d2 100%);border:1px solid #979797;border-radius:2px;"></div>
<div style="left:0px;top:514px;width:1280px;height:22px;background:#f0f0f0;border:1px solid #a0a0a0;border-right:none;"></div>
<span class="s" style="left:25px;top:518px;font-size:11px;line-height:15px;letter-spacing:-0.054px;">Hex View-1</span>
<div style="left:1217px;top:520px;width:9px;height:9px;border:1px solid #000;border-top-width:2px;"></div>
<div style="left:1242px;top:520px;width:6px;height:5px;border:1px solid #000;border-top-width:2px;"></div>
<div style="left:1240px;top:523px;width:6px;height:6px;border:1px solid #000;border-top-width:2px;background:#f0f0f0;"></div>
<svg style="left:1261px;top:520px;" width="10" height="9" viewBox="0 0 10 9"><path d="M1.5 1 L8.5 8 M8.5 1 L1.5 8" stroke="#000" stroke-width="1.6" fill="none"/></svg>
<div style="left:0px;top:538px;width:1280px;height:76px;background:#f0f0f0;border:1px solid #828790;"></div>
<div style="left:1px;top:539px;width:1261px;height:54px;background:#ccffff;"></div>
<div style="left:81px;top:539px;width:88px;height:16px;background:#8080f0;"></div>
<span class="m b" style="left:2px;top:540px;font-size:13.33px;line-height:16px;color:#0000e8;">00000000</span>
<span class="m b" style="left:82px;top:540px;font-size:13.33px;line-height:16px;color:#e8e8ff;">64 65 78 0A</span>
<span class="m b" style="left:178px;top:540px;font-size:13.33px;line-height:16px;color:#8080ff;">30 33 35 00  5D 2A 5A 3A C2 2A 94 E2</span>
<span class="m b" style="left:482px;top:540px;font-size:13.33px;line-height:16px;color:#0000ff;">dex.035.]*Z:T*Фт</span>
<span class="m b" style="left:2px;top:556px;font-size:13.33px;line-height:16px;color:#808080;">00000010</span>
<span class="m b" style="left:82px;top:556px;font-size:13.33px;line-height:16px;color:#8080ff;">05 48 B8 7F F4 16 D1 9F  A7 64 EB 9B 03 23 0F 8A</span>
<span class="m b" style="left:482px;top:556px;font-size:13.33px;line-height:16px;color:#0000ff;">.H¬.Ї.ТЯзdыЫ.#.К</span>
<span class="m b" style="left:2px;top:572px;font-size:13.33px;line-height:16px;color:#808080;">00000020</span>
<span class="m b" style="left:82px;top:572px;font-size:13.33px;line-height:16px;color:#8080ff;">90 9B 7D 00 70 00 00 00  78 56 34 12 00 00 00 00</span>
<span class="m b" style="left:482px;top:572px;font-size:13.33px;line-height:16px;color:#0000ff;">РЫ}.p...xV4.....</span>
<div style="left:1262px;top:539px;width:17px;height:74px;background:#f0f0f0;"></div>
<svg style="left:1267px;top:546px;" width="7" height="4" viewBox="0 0 7 4"><path d="M0 4 H7 L3.5 0 Z" fill="#505050"/></svg>
<svg style="left:1267px;top:604px;" width="7" height="4" viewBox="0 0 7 4"><path d="M0 0 H7 L3.5 4 Z" fill="#505050"/></svg>
<div style="left:1263px;top:557px;width:15px;height:16px;background:linear-gradient(90deg,#f8f8f8 0%,#ececec 45%,#dcdcdc 55%,#d2d2d2 100%);border:1px solid #979797;border-radius:2px;"></div>
<span class="m" style="left:3px;top:597px;font-size:12px;line-height:15px;letter-spacing:-0.2px;">00000000</span>
<span class="m" style="left:65px;top:597px;font-size:12px;line-height:15px;letter-spacing:-0.2px;">00000000: HEADER:asc_0</span>
<div style="left:59px;top:595px;width:1px;height:16px;background:#d0d0d0;"></div>
<div style="left:219px;top:595px;width:1px;height:16px;background:#d0d0d0;"></div>
<div style="left:232px;top:595px;width:1px;height:16px;background:#d0d0d0;"></div>
<div style="left:1px;top:612px;width:1278px;height:1px;background:#fff;"></div>
<div style="left:0px;top:618px;width:1280px;height:22px;background:#f0f0f0;border:1px solid #a0a0a0;border-right:none;"></div>
<span class="s" style="left:25px;top:622px;font-size:11px;line-height:15px;letter-spacing:0.057px;">Output window</span>
<div style="left:1217px;top:624px;width:9px;height:9px;border:1px solid #000;border-top-width:2px;"></div>
<div style="left:1242px;top:624px;width:6px;height:5px;border:1px solid #000;border-top-width:2px;"></div>
<div style="left:1240px;top:627px;width:6px;height:6px;border:1px solid #000;border-top-width:2px;background:#f0f0f0;"></div>
<svg style="left:1261px;top:624px;" width="10" height="9" viewBox="0 0 10 9"><path d="M1.5 1 L8.5 8 M8.5 1 L1.5 8" stroke="#000" stroke-width="1.6" fill="none"/></svg>
<div style="left:0px;top:642px;width:1280px;height:212px;background:#fff;border:1px solid #828790;border-bottom-color:#d8dce2;border-left-color:#d8dce2;border-right-color:#e4e7ec;"></div>
<span class="m b" style="left:5px;top:646px;font-size:13.33px;line-height:16px;">Debugger: thread 151 has exited (code 0)</span>
<span class="m b" style="left:5px;top:662px;font-size:13.33px;line-height:16px;">FFFFFFFF: thread has started (tid=152)</span>
<span class="m b" style="left:5px;top:678px;font-size:13.33px;line-height:16px;">Debugger: thread 152 has exited (code 0)</span>
<span class="m b" style="left:5px;top:694px;font-size:13.33px;line-height:16px;">FFFFFFFF: thread has started (tid=153)</span>
<span class="m b" style="left:5px;top:710px;font-size:13.33px;line-height:16px;">Debugger: thread 153 has exited (code 0)</span>
<span class="m b" style="left:5px;top:726px;font-size:13.33px;line-height:16px;">FFFFFFFF: thread has started (tid=154)</span>
<span class="m b" style="left:5px;top:742px;font-size:13.33px;line-height:16px;">Debugger: thread 154 has exited (code 0)</span>
<span class="m b" style="left:5px;top:758px;font-size:13.33px;line-height:16px;">FFFFFFFF: thread has started (tid=155)</span>
<span class="m b" style="left:5px;top:774px;font-size:13.33px;line-height:16px;">Debugger: thread 155 has exited (code 0)</span>
<span class="m b" style="left:5px;top:790px;font-size:13.33px;line-height:16px;">FFFFFFFF: thread has started (tid=156)</span>
<span class="m b" style="left:5px;top:806px;font-size:13.33px;line-height:16px;">Debugger: thread 156 has exited (code 0)</span>
<span class="m b" style="left:5px;top:822px;font-size:13.33px;line-height:16px;">FFFFFFFF: thread has started (tid=157)</span>
<span class="m b" style="left:5px;top:838px;font-size:13.33px;line-height:16px;">Debugger: thread 157 has exited (code 0)</span>
<div style="left:1262px;top:643px;width:17px;height:210px;background:#f0f0f0;"></div>
<svg style="left:1267px;top:650px;" width="7" height="4" viewBox="0 0 7 4"><path d="M0 4 H7 L3.5 0 Z" fill="#505050"/></svg>
<svg style="left:1267px;top:844px;" width="7" height="4" viewBox="0 0 7 4"><path d="M0 0 H7 L3.5 4 Z" fill="#505050"/></svg>
<div style="left:1263px;top:819px;width:15px;height:16px;background:linear-gradient(90deg,#f8f8f8 0%,#ececec 45%,#dcdcdc 55%,#d2d2d2 100%);border:1px solid #979797;border-radius:2px;"></div>
<div style="left:2px;top:856px;width:46px;height:22px;background:linear-gradient(#f4f4f4 0%,#ececec 45%,#dedede 55%,#d2d2d2 100%);border:1px solid #707070;border-radius:3px;box-shadow:inset 0 0 0 1px #fbfbfb;"></div>
<span class="s" style="left:15.5px;top:860px;font-size:11px;line-height:15px;letter-spacing:-0.148px;">IDC</span>
<div style="left:52px;top:855px;width:1227px;height:23px;background:#fff;border:1px solid #e0e3e8;border-top-color:#abadb3;border-radius:2px;"></div>
<span class="m" style="left:2px;top:885px;font-size:12px;line-height:15px;letter-spacing:-0.2px;">AU:  idle</span>
<span class="m" style="left:85px;top:885px;font-size:12px;line-height:15px;letter-spacing:-0.2px;">Down</span>
<span class="m" style="left:161px;top:885px;font-size:12px;line-height:15px;letter-spacing:-0.2px;">Disk: 646GB</span>
<div style="left:80px;top:882px;width:1px;height:16px;background:#c8c8c8;"></div>
<div style="left:156px;top:882px;width:1px;height:16px;background:#c8c8c8;"></div>
<div style="left:239px;top:882px;width:1px;height:16px;background:#c8c8c8;"></div>
<svg style="left:1px;top:2px;" width="17" height="17" viewBox="0 0 16.5 16.5"><defs><filter id="bl" x="-20%" y="-20%" width="140%" height="140%"><feGaussianBlur stdDeviation="0.45"/></filter></defs><g filter="url(#bl)"><path d="M1.5 4 Q2 0.8 6 0.6 Q10 0.3 12 3 Q15.8 3.5 15.8 7 Q15.6 10.5 12.5 10.5 Q12 12.5 13 13.5 L10 11 L8 6 L5 3.5 L2.5 6 Z" fill="#1a0e0c"/><path d="M2.3 4.8 Q3 2.2 5 2.2 Q8.2 3 8.2 7 Q8.4 9 9.5 10 L12.5 13 L14.5 15.6 H3.5 Q5.8 14.5 5.5 11.5 Q3.2 11 2.6 8.5 Z" fill="#e8d0bc"/><path d="M3 8.5 Q3.6 10.8 5.5 11.2 L5.6 9.5 Z" fill="#c86a50"/><path d="M5.5 11.5 Q6 14 4 15.6 H7 Z" fill="#a8703c" opacity=".7"/><rect x="3" y="5.6" width="1.6" height="0.9" fill="#806a60"/><rect x="5.6" y="5.8" width="1.6" height="0.9" fill="#806a60"/></g></svg>
<svg style="left:190px;top:48px;" width="18" height="17" viewBox="0 0 18 17"><rect x="6.5" y="3.5" width="10" height="12" fill="#fdfdfd" stroke="#b0b0b0"/><path d="M1 2.5 H4.5 V0.5 L9.5 5 L4.5 9.8 V7.5 H1 Z" fill="#a4a4a4"/><path d="M4 0 L9.8 5 L4 10.5" fill="none" stroke="#555" stroke-width="0.8" stroke-dasharray="1 1"/><text x="8.2" y="13.2" font-family="Liberation Sans" font-weight="bold" font-size="9.5" fill="#6c6c6c">C</text></svg>
<svg style="left:214px;top:48px;" width="18" height="18" viewBox="0 0 18 18"><rect x="1.5" y="4.5" width="10" height="13" fill="url(#wf)" stroke="#3a78c0"/><text x="3" y="14.2" font-family="Liberation Sans" font-weight="bold" font-size="9.5" fill="#000080">C</text><path d="M9 1 L16.5 5.5 L9 10.5 Z" fill="url(#gg)" stroke="#0a6a14" stroke-width="0.6"/></svg>
<svg style="left:249px;top:48px;" width="17" height="16" viewBox="0 0 17 16"><rect x="1.5" y="0.5" width="14" height="14" fill="url(#wf)" stroke="#3472de"/><rect x="1" y="0" width="15" height="3" fill="url(#wb)"/><rect x="2" y="1" width="11" height="1" fill="#6ff0ff" opacity=".8"/><rect x="0.5" y="5.5" width="9" height="10" fill="#fff" stroke="#1f4e8c"/><rect x="3" y="7" width="4" height="1" fill="#1010b0"/><rect x="3" y="9" width="4" height="1" fill="#1010b0"/><rect x="3" y="11" width="4" height="1" fill="#1010b0"/><rect x="3" y="13" width="4" height="1" fill="#1010b0"/><rect x="8.5" y="6" width="3" height="7" fill="#1a1a70"/><rect x="9" y="6" width="2" height="6.5" fill="#909090"/><circle cx="10" cy="4" r="3.1" fill="url(#red)"/></svg>
<svg style="left:272px;top:48px;" width="17" height="16" viewBox="0 0 17 16"><rect x="0.5" y="3" width="6" height="13" fill="#828282"/><circle cx="3.5" cy="3.5" r="3.6" fill="url(#gry)"/><circle cx="3.5" cy="9.5" r="1.7" fill="#9c9c9c"/><circle cx="3.5" cy="13.3" r="1.7" fill="#9c9c9c"/><rect x="7.5" y="3.2" width="8.5" height="2" fill="#909090"/><rect x="10.8" y="0" width="2" height="8.5" fill="#909090"/></svg>
<svg style="left:295px;top:48px;" width="17" height="16" viewBox="0 0 17 16"><rect x="0.5" y="3" width="6" height="13" fill="#828282"/><circle cx="3.5" cy="3.5" r="3.6" fill="url(#gry)"/><circle cx="3.5" cy="9.5" r="1.7" fill="#9c9c9c"/><circle cx="3.5" cy="13.3" r="1.7" fill="#9c9c9c"/><path d="M7 0.3 L16 8 M16 0.3 L7 8" stroke="#909090" stroke-width="1.1" fill="none"/></svg>
<svg style="left:330px;top:48px;" width="16" height="17" viewBox="0 0 16 17"><rect x="0.5" y="0.5" width="15" height="13" fill="url(#wf)" stroke="#3472de"/><rect x="0" y="0" width="16" height="3" fill="url(#wb)"/><rect x="1" y="1" width="12" height="1" fill="#6ff0ff" opacity=".8"/><rect x="2" y="3" width="5" height="3" fill="#000090"/><rect x="3" y="4" width="3" height="1" fill="#20d0e0"/><rect x="2" y="7" width="5" height="3" fill="#000090"/><rect x="3" y="8" width="3" height="1" fill="#20d0e0"/><path d="M0 11 H9 L4.5 16 Z" fill="#0a1cff"/><rect x="2" y="11" width="5" height="1" fill="#000090"/><rect x="3.5" y="12" width="2" height="1" fill="#30c0f0"/></svg>
<svg style="left:358px;top:48px;" width="18" height="17" viewBox="0 0 18 17"><path d="M8.5 0.5 H17.5 V13.5 H8.5 Z" fill="#f4faff" stroke="#1f4e8c"/><rect x="10" y="3" width="1" height="1" fill="#1030a0"/><rect x="12" y="3" width="4" height="1" fill="#1030a0"/><rect x="10" y="5" width="1" height="1" fill="#1030a0"/><rect x="12" y="5" width="4" height="1" fill="#1030a0"/><rect x="10" y="7" width="1" height="1" fill="#1030a0"/><rect x="12" y="7" width="4" height="1" fill="#1030a0"/><rect x="10" y="9" width="1" height="1" fill="#1030a0"/><rect x="12" y="9" width="4" height="1" fill="#1030a0"/><rect x="10" y="11" width="1" height="1" fill="#1030a0"/><rect x="12" y="11" width="4" height="1" fill="#1030a0"/><rect x="3" y="3" width="5" height="3" fill="#000090"/><rect x="4" y="4" width="3" height="1" fill="#20d0e0"/><rect x="3" y="7" width="5" height="3" fill="#000090"/><rect x="4" y="8" width="3" height="1" fill="#20d0e0"/><path d="M1 11 H10 L5.5 16 Z" fill="#0a1cff"/><rect x="3" y="11" width="5" height="1" fill="#000090"/><rect x="4.5" y="12" width="2" height="1" fill="#30c0f0"/></svg>
<svg style="left:381px;top:47px;" width="19" height="18" viewBox="0 0 19 18"><rect x="2" y="1" width="5" height="3" fill="#000090"/><rect x="3" y="2" width="3" height="1" fill="#20d0e0"/><rect x="2" y="5" width="5" height="3" fill="#000090"/><rect x="3" y="6" width="3" height="1" fill="#20d0e0"/><path d="M0 9 H9 L4.5 14 Z" fill="#0a1cff"/><rect x="2" y="9" width="5" height="1" fill="#000090"/><rect x="3.5" y="10" width="2" height="1" fill="#30c0f0"/><text x="7.5" y="14" font-family="Liberation Serif" font-style="italic" font-size="18" fill="#10182c">f</text></svg>
<svg style="left:411px;top:48px;" width="17" height="17" viewBox="-1 0 17 17"><path d="M2 0 H16 V15 H7.5 V14 H15 V3 H8 V2 H2 Z" fill="#2a6ae0"/><rect x="2" y="0" width="14" height="2" fill="url(#wb)"/><rect x="8" y="3" width="7" height="11" fill="#fff"/><path d="M9 6 H13.5 L14 7 V11 L12.5 12.5 H9.5 L8.5 11.5 V8.5 Z" fill="#bdf0ff" stroke="#1c50cc" stroke-width="1"/><path d="M9 8.5 H13 M9.5 10.5 H13" stroke="#1c50cc" stroke-width="1"/><rect x="14" y="6" width="1" height="1" fill="#fff"/><rect x="14" y="8" width="1" height="1" fill="#fff"/><rect x="2" y="3" width="5" height="3" fill="#000090"/><rect x="3" y="4" width="3" height="1" fill="#20d0e0"/><rect x="2" y="7" width="5" height="3" fill="#000090"/><rect x="3" y="8" width="3" height="1" fill="#20d0e0"/><path d="M0 11 H9 L4.5 16 Z" fill="#0a1cff"/><rect x="2" y="11" width="5" height="1" fill="#000090"/><rect x="3.5" y="12" width="2" height="1" fill="#30c0f0"/></svg>
<svg style="left:447px;top:48px;" width="13" height="17" viewBox="0 0 13 17"><g fill="none" stroke="#1a4cc8" stroke-width="1.7" stroke-linecap="round"><path d="M2 1.2 H8 Q11.5 1.5 11.2 4.5 Q11 7.2 7.5 7.5 H3"/><path d="M7.5 7.8 Q11.5 8.2 11.3 11 Q11 13.8 7.5 13.8 H3"/></g><path d="M0.5 7.5 L4.5 5 V10 Z" fill="#1a4cc8"/><path d="M0.5 13.8 L4.5 11.3 V16.3 Z" fill="#1a4cc8"/></svg>
<svg style="left:470px;top:48px;" width="14" height="16" viewBox="0 0 14 16"><path d="M3 2.2 H7 Q12.5 2.5 12.5 7.5 Q12.5 12.5 7 12.5 H4" fill="none" stroke="#1a4cc8" stroke-width="1.7" stroke-linecap="round"/><path d="M0.5 12.5 L5 9.8 V15.2 Z" fill="#1a4cc8"/></svg>
<svg style="left:492px;top:48px;" width="17" height="17" viewBox="0 0 17 17"><rect x="0.5" y="0.5" width="10" height="10" rx="1.5" fill="#18a838" stroke="#0a5a14"/><path d="M3 3 L6.5 5.5 L3 8 Z" fill="#fff"/><rect x="6.5" y="3" width="1.5" height="5" fill="#fff"/><path d="M11.5 7.5 Q15.5 8 15.5 11.5 Q15.5 14 11 14 H9" fill="none" stroke="#1a4cc8" stroke-width="1.6"/><path d="M6.5 14 L10 11.6 V16.4 Z" fill="#1a4cc8"/></svg>
<svg style="left:515px;top:49px;" width="17" height="15" viewBox="0 0 17 15"><rect x="0.5" y="3.0" width="10" height="10" rx="1.5" fill="#18a838" stroke="#0a5a14"/><path d="M3 5.5 L6.5 8.0 L3 10.5 Z" fill="#fff"/><rect x="6.5" y="5.5" width="1.5" height="5" fill="#fff"/><path d="M12 1.5 Q13.5 1.5 14 2.5 Q14.5 1.5 16 1.5 M14 2.5 V12.5 M12 13.5 Q13.5 13.5 14 12.5 Q14.5 13.5 16 13.5" fill="none" stroke="#000" stroke-width="1.2"/></svg>
<svg style="left:544px;top:48px;" width="16" height="16" viewBox="0 0 16 16"><rect x="0.5" y="0.5" width="15" height="15" fill="url(#wf)" stroke="#3472de"/><rect x="0" y="0" width="16" height="3" fill="url(#wb)"/><rect x="1" y="1" width="12" height="1" fill="#6ff0ff" opacity=".8"/><rect x="7.5" y="8.5" width="5" height="5" fill="#fbfdff" stroke="#1f4e8c"/><rect x="5.5" y="6.5" width="5" height="5" fill="#fbfdff" stroke="#1f4e8c"/><rect x="3.5" y="4.5" width="5" height="5" fill="#fbfdff" stroke="#1f4e8c"/></svg>
<svg style="left:566px;top:48px;" width="17" height="16" viewBox="0 0 17 16"><rect x="1.5" y="0.5" width="14" height="14" fill="url(#wf)" stroke="#3472de"/><rect x="1" y="0" width="15" height="3" fill="url(#wb)"/><rect x="2" y="1" width="11" height="1" fill="#6ff0ff" opacity=".8"/><path d="M0.5 6.5 H4.5 L7.5 9.5 V15.5 H0.5 Z" fill="#fff" stroke="#1f4e8c"/><path d="M4.5 6.5 V9.5 H7.5" fill="none" stroke="#1f4e8c"/><rect x="2" y="11" width="4" height="1" fill="#2a5ea0"/><rect x="2" y="13" width="4" height="1" fill="#2a5ea0"/><rect x="2" y="9" width="1" height="1" fill="#2a5ea0"/><path d="M9.5 4.5 H12 L13.5 6 V12.5 H9.5 Z" fill="#fff" stroke="#1f4e8c"/><path d="M9.5 7.5 H13.5" stroke="#1f4e8c"/></svg>
<svg style="left:602px;top:48px;" width="17" height="16" viewBox="0 0 17 16"><rect x="1.5" y="0.5" width="14" height="14" fill="url(#wf)" stroke="#3472de"/><rect x="1" y="0" width="15" height="3" fill="url(#wb)"/><rect x="2" y="1" width="11" height="1" fill="#6ff0ff" opacity=".8"/><ellipse cx="2.8" cy="8.5" rx="2.3" ry="3.2" fill="#cfe8ff" stroke="#1a4590" stroke-width="1.1"/><ellipse cx="9.8" cy="9.3" rx="2.5" ry="3.2" fill="#cfe8ff" stroke="#1a4590" stroke-width="1.1"/><path d="M5 8 Q6.3 7 7.5 8.5 M2 5.5 Q2.5 3.5 3.5 5 M12.2 8 Q13.5 5 14.6 5.8 V8" fill="none" stroke="#1a4590" stroke-width="1"/></svg>
<svg style="left:625px;top:48px;" width="17" height="16" viewBox="0 0 17 16"><ellipse cx="2.8" cy="10.5" rx="2.3" ry="3.2" fill="#cfe8ff" stroke="#1a4590" stroke-width="1.1"/><ellipse cx="9.8" cy="11.3" rx="2.5" ry="3.2" fill="#cfe8ff" stroke="#1a4590" stroke-width="1.1"/><path d="M5 10 Q6.3 9 7.5 10.5 M2 7.5 Q2.5 5.5 3.5 7 M12.2 10 Q13.5 7 14.6 7.8 V10" fill="none" stroke="#1a4590" stroke-width="1"/><rect x="10" y="0" width="3" height="9" fill="#0c7a10"/><rect x="7" y="3" width="9" height="3" fill="#0c7a10"/><rect x="10.8" y="0.8" width="1.4" height="7.4" fill="#30e040"/><rect x="7.8" y="3.8" width="7.4" height="1.4" fill="#30e040"/></svg>
<svg style="left:648px;top:48px;" width="17" height="16" viewBox="0 0 17 16"><ellipse cx="2.8" cy="10.5" rx="2.3" ry="3.2" fill="#eaeaea" stroke="#9a9a9a" stroke-width="1.1"/><ellipse cx="9.8" cy="11.3" rx="2.5" ry="3.2" fill="#eaeaea" stroke="#9a9a9a" stroke-width="1.1"/><path d="M5 10 Q6.3 9 7.5 10.5 M2 7.5 Q2.5 5.5 3.5 7 M12.2 10 Q13.5 7 14.6 7.8 V10" fill="none" stroke="#9a9a9a" stroke-width="1"/><path d="M7.5 0.3 L16.5 8 M16.5 0.3 L7.5 8" stroke="#8c8c8c" stroke-width="1.1" fill="none"/></svg>
<svg style="left:332px;top:127px;" width="15" height="15" viewBox="0 0 15 15"><rect x="0.5" y="0.5" width="14" height="14" fill="url(#wf)" stroke="#3472de"/><rect x="0" y="0" width="15" height="3" fill="url(#wb)"/><rect x="1" y="1" width="11" height="1" fill="#6ff0ff" opacity=".8"/><g stroke="#16386e" stroke-width="1.05" fill="none" stroke-linecap="round"><path d="M6.3 4.5 H8.8 M6.3 4.5 L4.5 13 M8.8 4.5 L10.8 13 M5.8 7.2 H9.3 M9.5 8 L4.8 12.6 M6.5 8.5 L9.8 11.2"/></g></svg>
<svg style="left:652px;top:127px;" width="16" height="15" viewBox="0 0 16 15"><rect x="0.5" y="0.5" width="15" height="14" fill="url(#wf)" stroke="#3472de"/><rect x="0" y="0" width="16" height="3" fill="url(#wb)"/><rect x="1" y="1" width="12" height="1" fill="#6ff0ff" opacity=".8"/><rect x="5" y="2" width="1" height="13" fill="#fff"/><path d="M5.5 2.5 L7.5 4.5 L5.5 6.5 L3.5 4.5 Z" fill="#0a2a9c"/><rect x="5" y="4.0" width="1" height="1" fill="#20e0f0"/><rect x="8.5" y="4.0" width="3" height="1" fill="#1038b0"/><path d="M5.5 6.5 L7.5 8.5 L5.5 10.5 L3.5 8.5 Z" fill="#0a2a9c"/><rect x="5" y="8.0" width="1" height="1" fill="#20e0f0"/><rect x="8.5" y="8.0" width="3" height="1" fill="#1038b0"/><path d="M5.5 10.5 L7.5 12.5 L5.5 14.5 L3.5 12.5 Z" fill="#0a2a9c"/><rect x="5" y="12.0" width="1" height="1" fill="#20e0f0"/><rect x="8.5" y="12.0" width="3" height="1" fill="#1038b0"/></svg>
<svg style="left:12px;top:151px;" width="17" height="16" viewBox="0 0 17 16"><rect x="0.5" y="0.5" width="14" height="13" fill="url(#wf)" stroke="#3472de"/><rect x="0" y="0" width="15" height="3" fill="url(#wb)"/><rect x="1" y="1" width="11" height="1" fill="#6ff0ff" opacity=".8"/><rect x="5.5" y="3.5" width="11" height="12" fill="#fcfeff" stroke="#1f5090"/><rect x="7" y="5" width="4" height="1" fill="#4a5660"/><rect x="9" y="7" width="5" height="1" fill="#4a5660"/><rect x="9" y="9" width="5" height="1" fill="#4a5660"/><rect x="7" y="11" width="4" height="1" fill="#4a5660"/><rect x="9" y="13" width="5" height="1" fill="#4a5660"/></svg>
<svg style="left:133px;top:150px;" width="17" height="17" viewBox="-1 0 17 17"><path d="M2 0 H16 V15 H7.5 V14 H15 V3 H8 V2 H2 Z" fill="#2a6ae0"/><rect x="2" y="0" width="14" height="2" fill="url(#wb)"/><rect x="8" y="3" width="7" height="11" fill="#fff"/><path d="M9 6 H13.5 L14 7 V11 L12.5 12.5 H9.5 L8.5 11.5 V8.5 Z" fill="#bdf0ff" stroke="#1c50cc" stroke-width="1"/><path d="M9 8.5 H13 M9.5 10.5 H13" stroke="#1c50cc" stroke-width="1"/><rect x="14" y="6" width="1" height="1" fill="#fff"/><rect x="14" y="8" width="1" height="1" fill="#fff"/><rect x="2" y="3" width="5" height="3" fill="#000090"/><rect x="3" y="4" width="3" height="1" fill="#20d0e0"/><rect x="2" y="7" width="5" height="3" fill="#000090"/><rect x="3" y="8" width="3" height="1" fill="#20d0e0"/><path d="M0 11 H9 L4.5 16 Z" fill="#0a1cff"/><rect x="2" y="11" width="5" height="1" fill="#000090"/><rect x="3.5" y="12" width="2" height="1" fill="#30c0f0"/></svg>
<svg style="left:243px;top:151px;" width="17" height="16" viewBox="0 0 17 16"><rect x="0.5" y="0.5" width="14" height="13" fill="url(#wf)" stroke="#3472de"/><rect x="0" y="0" width="15" height="3" fill="url(#wb)"/><rect x="1" y="1" width="11" height="1" fill="#6ff0ff" opacity=".8"/><rect x="5.5" y="3.5" width="11" height="12" fill="#fcfeff" stroke="#1f5090"/><rect x="7" y="5" width="4" height="1" fill="#4a5660"/><rect x="9" y="7" width="5" height="1" fill="#4a5660"/><rect x="9" y="9" width="5" height="1" fill="#4a5660"/><rect x="7" y="11" width="4" height="1" fill="#4a5660"/><rect x="9" y="13" width="5" height="1" fill="#4a5660"/></svg>
<svg style="left:7px;top:195px;" width="17" height="17" viewBox="-1 0 17 17"><path d="M2 0 H16 V15 H7.5 V14 H15 V3 H8 V2 H2 Z" fill="#2a6ae0"/><rect x="2" y="0" width="14" height="2" fill="url(#wb)"/><rect x="8" y="3" width="7" height="11" fill="#fff"/><path d="M9 6 H13.5 L14 7 V11 L12.5 12.5 H9.5 L8.5 11.5 V8.5 Z" fill="#bdf0ff" stroke="#1c50cc" stroke-width="1"/><path d="M9 8.5 H13 M9.5 10.5 H13" stroke="#1c50cc" stroke-width="1"/><rect x="14" y="6" width="1" height="1" fill="#fff"/><rect x="14" y="8" width="1" height="1" fill="#fff"/><rect x="2" y="3" width="5" height="3" fill="#000090"/><rect x="3" y="4" width="3" height="1" fill="#20d0e0"/><rect x="2" y="7" width="5" height="3" fill="#000090"/><rect x="3" y="8" width="3" height="1" fill="#20d0e0"/><path d="M0 11 H9 L4.5 16 Z" fill="#0a1cff"/><rect x="2" y="11" width="5" height="1" fill="#000090"/><rect x="3.5" y="12" width="2" height="1" fill="#30c0f0"/></svg>
<svg style="left:7px;top:212px;" width="17" height="17" viewBox="-1 0 17 17"><path d="M2 0 H16 V15 H7.5 V14 H15 V3 H8 V2 H2 Z" fill="#2a6ae0"/><rect x="2" y="0" width="14" height="2" fill="url(#wb)"/><rect x="8" y="3" width="7" height="11" fill="#fff"/><path d="M9 6 H13.5 L14 7 V11 L12.5 12.5 H9.5 L8.5 11.5 V8.5 Z" fill="#bdf0ff" stroke="#1c50cc" stroke-width="1"/><path d="M9 8.5 H13 M9.5 10.5 H13" stroke="#1c50cc" stroke-width="1"/><rect x="14" y="6" width="1" height="1" fill="#fff"/><rect x="14" y="8" width="1" height="1" fill="#fff"/><rect x="2" y="3" width="5" height="3" fill="#000090"/><rect x="3" y="4" width="3" height="1" fill="#20d0e0"/><rect x="2" y="7" width="5" height="3" fill="#000090"/><rect x="3" y="8" width="3" height="1" fill="#20d0e0"/><path d="M0 11 H9 L4.5 16 Z" fill="#0a1cff"/><rect x="2" y="11" width="5" height="1" fill="#000090"/><rect x="3.5" y="12" width="2" height="1" fill="#30c0f0"/></svg>
<svg style="left:7px;top:229px;" width="17" height="17" viewBox="-1 0 17 17"><path d="M2 0 H16 V15 H7.5 V14 H15 V3 H8 V2 H2 Z" fill="#2a6ae0"/><rect x="2" y="0" width="14" height="2" fill="url(#wb)"/><rect x="8" y="3" width="7" height="11" fill="#fff"/><path d="M9 6 H13.5 L14 7 V11 L12.5 12.5 H9.5 L8.5 11.5 V8.5 Z" fill="#bdf0ff" stroke="#1c50cc" stroke-width="1"/><path d="M9 8.5 H13 M9.5 10.5 H13" stroke="#1c50cc" stroke-width="1"/><rect x="14" y="6" width="1" height="1" fill="#fff"/><rect x="14" y="8" width="1" height="1" fill="#fff"/><rect x="2" y="3" width="5" height="3" fill="#000090"/><rect x="3" y="4" width="3" height="1" fill="#20d0e0"/><rect x="2" y="7" width="5" height="3" fill="#000090"/><rect x="3" y="8" width="3" height="1" fill="#20d0e0"/><path d="M0 11 H9 L4.5 16 Z" fill="#0a1cff"/><rect x="2" y="11" width="5" height="1" fill="#000090"/><rect x="3.5" y="12" width="2" height="1" fill="#30c0f0"/></svg>
<svg style="left:7px;top:246px;" width="17" height="17" viewBox="-1 0 17 17"><path d="M2 0 H16 V15 H7.5 V14 H15 V3 H8 V2 H2 Z" fill="#2a6ae0"/><rect x="2" y="0" width="14" height="2" fill="url(#wb)"/><rect x="8" y="3" width="7" height="11" fill="#fff"/><path d="M9 6 H13.5 L14 7 V11 L12.5 12.5 H9.5 L8.5 11.5 V8.5 Z" fill="#bdf0ff" stroke="#1c50cc" stroke-width="1"/><path d="M9 8.5 H13 M9.5 10.5 H13" stroke="#1c50cc" stroke-width="1"/><rect x="14" y="6" width="1" height="1" fill="#fff"/><rect x="14" y="8" width="1" height="1" fill="#fff"/><rect x="2" y="3" width="5" height="3" fill="#000090"/><rect x="3" y="4" width="3" height="1" fill="#20d0e0"/><rect x="2" y="7" width="5" height="3" fill="#000090"/><rect x="3" y="8" width="3" height="1" fill="#20d0e0"/><path d="M0 11 H9 L4.5 16 Z" fill="#0a1cff"/><rect x="2" y="11" width="5" height="1" fill="#000090"/><rect x="3.5" y="12" width="2" height="1" fill="#30c0f0"/></svg>
<svg style="left:7px;top:263px;" width="17" height="17" viewBox="-1 0 17 17"><path d="M2 0 H16 V15 H7.5 V14 H15 V3 H8 V2 H2 Z" fill="#2a6ae0"/><rect x="2" y="0" width="14" height="2" fill="url(#wb)"/><rect x="8" y="3" width="7" height="11" fill="#fff"/><path d="M9 6 H13.5 L14 7 V11 L12.5 12.5 H9.5 L8.5 11.5 V8.5 Z" fill="#bdf0ff" stroke="#1c50cc" stroke-width="1"/><path d="M9 8.5 H13 M9.5 10.5 H13" stroke="#1c50cc" stroke-width="1"/><rect x="14" y="6" width="1" height="1" fill="#fff"/><rect x="14" y="8" width="1" height="1" fill="#fff"/><rect x="2" y="3" width="5" height="3" fill="#000090"/><rect x="3" y="4" width="3" height="1" fill="#20d0e0"/><rect x="2" y="7" width="5" height="3" fill="#000090"/><rect x="3" y="8" width="3" height="1" fill="#20d0e0"/><path d="M0 11 H9 L4.5 16 Z" fill="#0a1cff"/><rect x="2" y="11" width="5" height="1" fill="#000090"/><rect x="3.5" y="12" width="2" height="1" fill="#30c0f0"/></svg>
<svg style="left:7px;top:280px;" width="17" height="17" viewBox="-1 0 17 17"><path d="M2 0 H16 V15 H7.5 V14 H15 V3 H8 V2 H2 Z" fill="#2a6ae0"/><rect x="2" y="0" width="14" height="2" fill="url(#wb)"/><rect x="8" y="3" width="7" height="11" fill="#fff"/><path d="M9 6 H13.5 L14 7 V11 L12.5 12.5 H9.5 L8.5 11.5 V8.5 Z" fill="#bdf0ff" stroke="#1c50cc" stroke-width="1"/><path d="M9 8.5 H13 M9.5 10.5 H13" stroke="#1c50cc" stroke-width="1"/><rect x="14" y="6" width="1" height="1" fill="#fff"/><rect x="14" y="8" width="1" height="1" fill="#fff"/><rect x="2" y="3" width="5" height="3" fill="#000090"/><rect x="3" y="4" width="3" height="1" fill="#20d0e0"/><rect x="2" y="7" width="5" height="3" fill="#000090"/><rect x="3" y="8" width="3" height="1" fill="#20d0e0"/><path d="M0 11 H9 L4.5 16 Z" fill="#0a1cff"/><rect x="2" y="11" width="5" height="1" fill="#000090"/><rect x="3.5" y="12" width="2" height="1" fill="#30c0f0"/></svg>
<svg style="left:7px;top:297px;" width="17" height="17" viewBox="-1 0 17 17"><path d="M2 0 H16 V15 H7.5 V14 H15 V3 H8 V2 H2 Z" fill="#2a6ae0"/><rect x="2" y="0" width="14" height="2" fill="url(#wb)"/><rect x="8" y="3" width="7" height="11" fill="#fff"/><path d="M9 6 H13.5 L14 7 V11 L12.5 12.5 H9.5 L8.5 11.5 V8.5 Z" fill="#bdf0ff" stroke="#1c50cc" stroke-width="1"/><path d="M9 8.5 H13 M9.5 10.5 H13" stroke="#1c50cc" stroke-width="1"/><rect x="14" y="6" width="1" height="1" fill="#fff"/><rect x="14" y="8" width="1" height="1" fill="#fff"/><rect x="2" y="3" width="5" height="3" fill="#000090"/><rect x="3" y="4" width="3" height="1" fill="#20d0e0"/><rect x="2" y="7" width="5" height="3" fill="#000090"/><rect x="3" y="8" width="3" height="1" fill="#20d0e0"/><path d="M0 11 H9 L4.5 16 Z" fill="#0a1cff"/><rect x="2" y="11" width="5" height="1" fill="#000090"/><rect x="3.5" y="12" width="2" height="1" fill="#30c0f0"/></svg>
<svg style="left:7px;top:314px;" width="17" height="17" viewBox="-1 0 17 17"><path d="M2 0 H16 V15 H7.5 V14 H15 V3 H8 V2 H2 Z" fill="#2a6ae0"/><rect x="2" y="0" width="14" height="2" fill="url(#wb)"/><rect x="8" y="3" width="7" height="11" fill="#fff"/><path d="M9 6 H13.5 L14 7 V11 L12.5 12.5 H9.5 L8.5 11.5 V8.5 Z" fill="#bdf0ff" stroke="#1c50cc" stroke-width="1"/><path d="M9 8.5 H13 M9.5 10.5 H13" stroke="#1c50cc" stroke-width="1"/><rect x="14" y="6" width="1" height="1" fill="#fff"/><rect x="14" y="8" width="1" height="1" fill="#fff"/><rect x="2" y="3" width="5" height="3" fill="#000090"/><rect x="3" y="4" width="3" height="1" fill="#20d0e0"/><rect x="2" y="7" width="5" height="3" fill="#000090"/><rect x="3" y="8" width="3" height="1" fill="#20d0e0"/><path d="M0 11 H9 L4.5 16 Z" fill="#0a1cff"/><rect x="2" y="11" width="5" height="1" fill="#000090"/><rect x="3.5" y="12" width="2" height="1" fill="#30c0f0"/></svg>
<svg style="left:7px;top:331px;" width="17" height="17" viewBox="-1 0 17 17"><path d="M2 0 H16 V15 H7.5 V14 H15 V3 H8 V2 H2 Z" fill="#2a6ae0"/><rect x="2" y="0" width="14" height="2" fill="url(#wb)"/><rect x="8" y="3" width="7" height="11" fill="#fff"/><path d="M9 6 H13.5 L14 7 V11 L12.5 12.5 H9.5 L8.5 11.5 V8.5 Z" fill="#bdf0ff" stroke="#1c50cc" stroke-width="1"/><path d="M9 8.5 H13 M9.5 10.5 H13" stroke="#1c50cc" stroke-width="1"/><rect x="14" y="6" width="1" height="1" fill="#fff"/><rect x="14" y="8" width="1" height="1" fill="#fff"/><rect x="2" y="3" width="5" height="3" fill="#000090"/><rect x="3" y="4" width="3" height="1" fill="#20d0e0"/><rect x="2" y="7" width="5" height="3" fill="#000090"/><rect x="3" y="8" width="3" height="1" fill="#20d0e0"/><path d="M0 11 H9 L4.5 16 Z" fill="#0a1cff"/><rect x="2" y="11" width="5" height="1" fill="#000090"/><rect x="3.5" y="12" width="2" height="1" fill="#30c0f0"/></svg>
<svg style="left:7px;top:348px;" width="17" height="17" viewBox="-1 0 17 17"><path d="M2 0 H16 V15 H7.5 V14 H15 V3 H8 V2 H2 Z" fill="#2a6ae0"/><rect x="2" y="0" width="14" height="2" fill="url(#wb)"/><rect x="8" y="3" width="7" height="11" fill="#fff"/><path d="M9 6 H13.5 L14 7 V11 L12.5 12.5 H9.5 L8.5 11.5 V8.5 Z" fill="#bdf0ff" stroke="#1c50cc" stroke-width="1"/><path d="M9 8.5 H13 M9.5 10.5 H13" stroke="#1c50cc" stroke-width="1"/><rect x="14" y="6" width="1" height="1" fill="#fff"/><rect x="14" y="8" width="1" height="1" fill="#fff"/><rect x="2" y="3" width="5" height="3" fill="#000090"/><rect x="3" y="4" width="3" height="1" fill="#20d0e0"/><rect x="2" y="7" width="5" height="3" fill="#000090"/><rect x="3" y="8" width="3" height="1" fill="#20d0e0"/><path d="M0 11 H9 L4.5 16 Z" fill="#0a1cff"/><rect x="2" y="11" width="5" height="1" fill="#000090"/><rect x="3.5" y="12" width="2" height="1" fill="#30c0f0"/></svg>
<svg style="left:7px;top:365px;" width="17" height="17" viewBox="-1 0 17 17"><path d="M2 0 H16 V15 H7.5 V14 H15 V3 H8 V2 H2 Z" fill="#2a6ae0"/><rect x="2" y="0" width="14" height="2" fill="url(#wb)"/><rect x="8" y="3" width="7" height="11" fill="#fff"/><path d="M9 6 H13.5 L14 7 V11 L12.5 12.5 H9.5 L8.5 11.5 V8.5 Z" fill="#bdf0ff" stroke="#1c50cc" stroke-width="1"/><path d="M9 8.5 H13 M9.5 10.5 H13" stroke="#1c50cc" stroke-width="1"/><rect x="14" y="6" width="1" height="1" fill="#fff"/><rect x="14" y="8" width="1" height="1" fill="#fff"/><rect x="2" y="3" width="5" height="3" fill="#000090"/><rect x="3" y="4" width="3" height="1" fill="#20d0e0"/><rect x="2" y="7" width="5" height="3" fill="#000090"/><rect x="3" y="8" width="3" height="1" fill="#20d0e0"/><path d="M0 11 H9 L4.5 16 Z" fill="#0a1cff"/><rect x="2" y="11" width="5" height="1" fill="#000090"/><rect x="3.5" y="12" width="2" height="1" fill="#30c0f0"/></svg>
<svg style="left:901px;top:151px;" width="18" height="16" viewBox="0 0 18 16"><g stroke="#111" stroke-width="1.3" stroke-linecap="round"><path d="M5.5 3.5 L3.5 1.2 M12.5 3.5 L14.5 1.2 M3.5 7 L1.5 6.3 M14.5 7 L16.5 6.3 M4.5 12.8 L2 14.2 M13.5 12.8 L16 14.2"/></g><ellipse cx="9" cy="9" rx="6" ry="7" fill="url(#bug)"/><path d="M4.2 5 Q5.5 1.8 9 1.8 Q12.5 1.8 13.8 5 Q9 7.2 4.2 5 Z" fill="#3a2008"/><path d="M9 6 V15.5" stroke="#b03010" stroke-width="1"/><path d="M9.7 6.5 V10" stroke="#ffe8d0" stroke-width="0.8"/></svg>
<svg style="left:902px;top:216px;" width="17" height="16" viewBox="0 0 17 16"><rect x="1.5" y="0.5" width="14" height="14" fill="url(#wf)" stroke="#3472de"/><rect x="1" y="0" width="15" height="3" fill="url(#wb)"/><rect x="2" y="1" width="11" height="1" fill="#6ff0ff" opacity=".8"/><path d="M0.5 6.5 H4.5 L7.5 9.5 V15.5 H0.5 Z" fill="#fff" stroke="#1f4e8c"/><path d="M4.5 6.5 V9.5 H7.5" fill="none" stroke="#1f4e8c"/><rect x="2" y="11" width="4" height="1" fill="#2a5ea0"/><rect x="2" y="13" width="4" height="1" fill="#2a5ea0"/><rect x="2" y="9" width="1" height="1" fill="#2a5ea0"/><path d="M9.5 4.5 H12 L13.5 6 V12.5 H9.5 Z" fill="#fff" stroke="#1f4e8c"/><path d="M9.5 7.5 H13.5" stroke="#1f4e8c"/></svg>
<svg style="left:905px;top:261px;" width="17" height="16" viewBox="0 0 17 16"><rect x="1.5" y="0.5" width="14" height="14" fill="url(#wf)" stroke="#3472de"/><rect x="1" y="0" width="15" height="3" fill="url(#wb)"/><rect x="2" y="1" width="11" height="1" fill="#6ff0ff" opacity=".8"/><path d="M0.5 6.5 H4.5 L7.5 9.5 V15.5 H0.5 Z" fill="#fff" stroke="#1f4e8c"/><path d="M4.5 6.5 V9.5 H7.5" fill="none" stroke="#1f4e8c"/><rect x="2" y="11" width="4" height="1" fill="#2a5ea0"/><rect x="2" y="13" width="4" height="1" fill="#2a5ea0"/><rect x="2" y="9" width="1" height="1" fill="#2a5ea0"/><path d="M9.5 4.5 H12 L13.5 6 V12.5 H9.5 Z" fill="#fff" stroke="#1f4e8c"/><path d="M9.5 7.5 H13.5" stroke="#1f4e8c"/></svg>
<svg style="left:902px;top:335px;" width="16" height="16" viewBox="0 0 16 16"><rect x="0.5" y="0.5" width="15" height="15" fill="url(#wf)" stroke="#3472de"/><rect x="0" y="0" width="16" height="3" fill="url(#wb)"/><rect x="1" y="1" width="12" height="1" fill="#6ff0ff" opacity=".8"/><rect x="7.5" y="8.5" width="5" height="5" fill="#fbfdff" stroke="#1f4e8c"/><rect x="5.5" y="6.5" width="5" height="5" fill="#fbfdff" stroke="#1f4e8c"/><rect x="3.5" y="4.5" width="5" height="5" fill="#fbfdff" stroke="#1f4e8c"/></svg>
<svg style="left:5px;top:517px;" width="15" height="15" viewBox="0 0 15 15"><rect x="0.5" y="0.5" width="14" height="14" fill="url(#wf)" stroke="#3472de"/><rect x="0" y="0" width="15" height="3" fill="url(#wb)"/><rect x="1" y="1" width="11" height="1" fill="#6ff0ff" opacity=".8"/><path d="M7.5 4 L11.5 6.2 V10.8 L7.5 13 L3.5 10.8 V6.2 Z" fill="#dcecff" stroke="#3030ff" stroke-width="1"/></svg>
<svg style="left:6px;top:621px;" width="14" height="16" viewBox="0 0 14 16"><rect x="0.5" y="0.5" width="13" height="15" fill="#f6faff" stroke="#56646e"/><rect x="0" y="0" width="14" height="3" fill="#0a3cb0"/><rect x="0" y="0" width="14" height="1" fill="#0a9090"/><rect x="1" y="1" width="12" height="1" fill="#50e8ff"/><rect x="3" y="6" width="8" height="1" fill="#56626a"/><rect x="3" y="8" width="8" height="1" fill="#56626a"/><rect x="3" y="10" width="8" height="1" fill="#56626a"/><rect x="3" y="12" width="8" height="1" fill="#56626a"/></svg>
<svg style="left:1190px;top:9px;" width="13" height="7" viewBox="0 0 13 7"><rect x="1" y="1" width="11" height="5" rx="1.2" fill="#fff" stroke="#3c4656" stroke-width="1"/></svg>
<svg style="left:1222px;top:4px;" width="15" height="13" viewBox="0 0 15 13"><g fill="#fff" stroke="#3c4656" stroke-width="1"><path d="M5.5 1.5 H13.5 V9.5 H5.5 Z M8 4 H11 V7 H8 Z" fill-rule="evenodd"/><path d="M1.5 4.5 H9.5 V11.5 H1.5 Z M4 7.5 H7 V9 H4 Z" fill-rule="evenodd"/></g></svg>
<svg style="left:1256px;top:5px;" width="13" height="11" viewBox="0 0 13 11"><path d="M1.5 1.5 L4.5 1.5 L6.5 3.8 L8.5 1.5 L11.5 1.5 L8.3 5.5 L11.5 9.5 L8.5 9.5 L6.5 7.2 L4.5 9.5 L1.5 9.5 L4.7 5.5 Z" fill="#fff" stroke="#4a3030" stroke-width="0.9"/></svg>
</body></html>
